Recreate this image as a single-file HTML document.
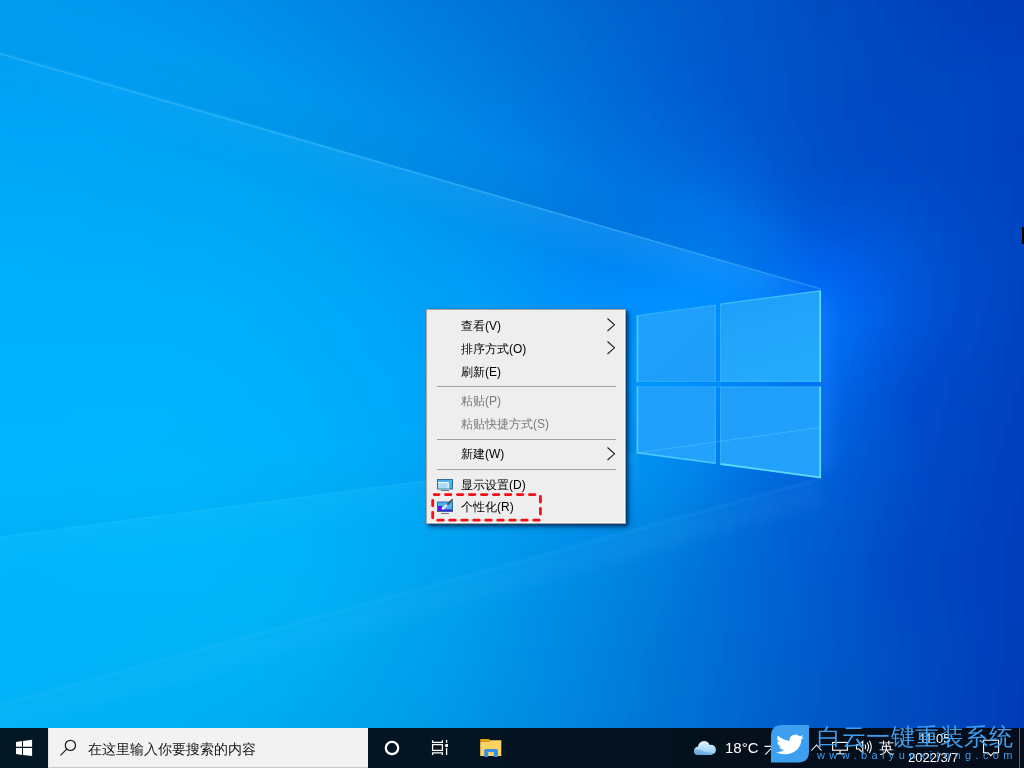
<!DOCTYPE html>
<html><head><meta charset="utf-8">
<style>
html,body{margin:0;padding:0;width:1024px;height:768px;overflow:hidden;background:#0a7ee0;font-family:"Liberation Sans",sans-serif;}
#wall{position:absolute;left:0;top:0;width:1024px;height:768px;}
#menu{position:absolute;left:426px;top:309px;width:198px;height:213px;background:#eeeeee;border:1px solid #aaa49e;box-shadow:2px 2px 3px rgba(0,10,40,0.5),3px 3px 6px rgba(0,10,40,0.35);}
#menu:after{content:"";position:absolute;left:0;top:0;right:0;bottom:0;border-right:1px solid #f8f8f8;border-bottom:1px solid #f8f8f8;}
.it{position:absolute;left:34px;font-size:12px;line-height:14px;color:#000;white-space:nowrap;}
.dis{color:#7a7a7a;}
.sep{position:absolute;left:10px;width:179px;height:1px;background:#a0a0a0;}
#taskbar{position:absolute;left:0;top:728px;width:1024px;height:40px;background:linear-gradient(90deg,#031824 0%,#041522 40%,#050f1c 75%,#050d1a 100%);}
#search{position:absolute;left:48px;top:0;width:320px;height:40px;background:#f2f2f2;box-sizing:border-box;border-left:1px solid #e4e4e4;border-bottom:1px solid #c8c8c8;}
.stxt{position:absolute;left:39px;top:13px;font-size:14px;line-height:16px;color:#161616;white-space:nowrap;}
.w{position:absolute;color:#fff;white-space:nowrap;}
svg.ic{position:absolute;overflow:visible;}
#menu,#taskbar,.w{will-change:transform;}
</style></head><body>
<svg id="wall" width="1024" height="768" viewBox="0 0 1024 768"><defs><linearGradient id="r0" gradientUnits="userSpaceOnUse" x1="-48" y1="0" x2="1072" y2="0"><stop offset="0.0000" stop-color="#009bef"/><stop offset="0.0286" stop-color="#009aee"/><stop offset="0.0571" stop-color="#0099ee"/><stop offset="0.0857" stop-color="#0098ed"/><stop offset="0.1143" stop-color="#0097ed"/><stop offset="0.1429" stop-color="#0095ed"/><stop offset="0.1714" stop-color="#0093ec"/><stop offset="0.2000" stop-color="#0091eb"/><stop offset="0.2286" stop-color="#008fe9"/><stop offset="0.2571" stop-color="#008ce8"/><stop offset="0.2857" stop-color="#0089e6"/><stop offset="0.3143" stop-color="#0086e4"/><stop offset="0.3429" stop-color="#0083e2"/><stop offset="0.3714" stop-color="#0080e0"/><stop offset="0.4000" stop-color="#007cdd"/><stop offset="0.4286" stop-color="#0079da"/><stop offset="0.4571" stop-color="#0075d8"/><stop offset="0.4857" stop-color="#0072d5"/><stop offset="0.5143" stop-color="#006ed3"/><stop offset="0.5429" stop-color="#006ad1"/><stop offset="0.5714" stop-color="#0166cf"/><stop offset="0.6000" stop-color="#0162cd"/><stop offset="0.6286" stop-color="#025ecb"/><stop offset="0.6571" stop-color="#025ac9"/><stop offset="0.6857" stop-color="#0357c7"/><stop offset="0.7143" stop-color="#0353c5"/><stop offset="0.7429" stop-color="#0450c2"/><stop offset="0.7714" stop-color="#044dc0"/><stop offset="0.8000" stop-color="#044abe"/><stop offset="0.8286" stop-color="#0546bd"/><stop offset="0.8571" stop-color="#0543bb"/><stop offset="0.8857" stop-color="#0640b9"/><stop offset="0.9143" stop-color="#063db8"/><stop offset="0.9429" stop-color="#063bb7"/><stop offset="0.9714" stop-color="#0639b6"/><stop offset="1.0000" stop-color="#0737b5"/></linearGradient><linearGradient id="r1" gradientUnits="userSpaceOnUse" x1="-48" y1="0" x2="1072" y2="0"><stop offset="0.0000" stop-color="#009def"/><stop offset="0.0286" stop-color="#009cef"/><stop offset="0.0571" stop-color="#009aef"/><stop offset="0.0857" stop-color="#0099ef"/><stop offset="0.1143" stop-color="#0098ef"/><stop offset="0.1429" stop-color="#0097ee"/><stop offset="0.1714" stop-color="#0095ed"/><stop offset="0.2000" stop-color="#0093ec"/><stop offset="0.2286" stop-color="#0091eb"/><stop offset="0.2571" stop-color="#008ee9"/><stop offset="0.2857" stop-color="#008be7"/><stop offset="0.3143" stop-color="#0088e5"/><stop offset="0.3429" stop-color="#0085e3"/><stop offset="0.3714" stop-color="#0081e1"/><stop offset="0.4000" stop-color="#007ede"/><stop offset="0.4286" stop-color="#007adc"/><stop offset="0.4571" stop-color="#0077d9"/><stop offset="0.4857" stop-color="#0073d7"/><stop offset="0.5143" stop-color="#006fd4"/><stop offset="0.5429" stop-color="#006bd2"/><stop offset="0.5714" stop-color="#0167d0"/><stop offset="0.6000" stop-color="#0163ce"/><stop offset="0.6286" stop-color="#025fcc"/><stop offset="0.6571" stop-color="#025bca"/><stop offset="0.6857" stop-color="#0357c8"/><stop offset="0.7143" stop-color="#0354c6"/><stop offset="0.7429" stop-color="#0451c3"/><stop offset="0.7714" stop-color="#044ec1"/><stop offset="0.8000" stop-color="#044abf"/><stop offset="0.8286" stop-color="#0547be"/><stop offset="0.8571" stop-color="#0544bc"/><stop offset="0.8857" stop-color="#0541bb"/><stop offset="0.9143" stop-color="#063eb9"/><stop offset="0.9429" stop-color="#063cb8"/><stop offset="0.9714" stop-color="#063ab7"/><stop offset="1.0000" stop-color="#0638b6"/></linearGradient><linearGradient id="r2" gradientUnits="userSpaceOnUse" x1="-48" y1="0" x2="1072" y2="0"><stop offset="0.0000" stop-color="#009ef0"/><stop offset="0.0286" stop-color="#009df0"/><stop offset="0.0571" stop-color="#009cf0"/><stop offset="0.0857" stop-color="#009bf0"/><stop offset="0.1143" stop-color="#009af0"/><stop offset="0.1429" stop-color="#0099f0"/><stop offset="0.1714" stop-color="#0097ef"/><stop offset="0.2000" stop-color="#0095ed"/><stop offset="0.2286" stop-color="#0093ec"/><stop offset="0.2571" stop-color="#0090ea"/><stop offset="0.2857" stop-color="#008de9"/><stop offset="0.3143" stop-color="#008ae7"/><stop offset="0.3429" stop-color="#0087e5"/><stop offset="0.3714" stop-color="#0083e2"/><stop offset="0.4000" stop-color="#0080e0"/><stop offset="0.4286" stop-color="#007cdd"/><stop offset="0.4571" stop-color="#0078db"/><stop offset="0.4857" stop-color="#0075d8"/><stop offset="0.5143" stop-color="#0071d6"/><stop offset="0.5429" stop-color="#006dd3"/><stop offset="0.5714" stop-color="#0168d2"/><stop offset="0.6000" stop-color="#0164d0"/><stop offset="0.6286" stop-color="#0260ce"/><stop offset="0.6571" stop-color="#025ccb"/><stop offset="0.6857" stop-color="#0358c9"/><stop offset="0.7143" stop-color="#0354c7"/><stop offset="0.7429" stop-color="#0351c4"/><stop offset="0.7714" stop-color="#044ec2"/><stop offset="0.8000" stop-color="#044bc0"/><stop offset="0.8286" stop-color="#0548bf"/><stop offset="0.8571" stop-color="#0545bd"/><stop offset="0.8857" stop-color="#0542bc"/><stop offset="0.9143" stop-color="#063fba"/><stop offset="0.9429" stop-color="#063db9"/><stop offset="0.9714" stop-color="#063cb9"/><stop offset="1.0000" stop-color="#0639b7"/></linearGradient><linearGradient id="r3" gradientUnits="userSpaceOnUse" x1="-48" y1="0" x2="1072" y2="0"><stop offset="0.0000" stop-color="#009ff1"/><stop offset="0.0286" stop-color="#009ef1"/><stop offset="0.0571" stop-color="#009df1"/><stop offset="0.0857" stop-color="#009cf1"/><stop offset="0.1143" stop-color="#009cf1"/><stop offset="0.1429" stop-color="#009af1"/><stop offset="0.1714" stop-color="#0099f0"/><stop offset="0.2000" stop-color="#0097ef"/><stop offset="0.2286" stop-color="#0095ed"/><stop offset="0.2571" stop-color="#0092ec"/><stop offset="0.2857" stop-color="#008fea"/><stop offset="0.3143" stop-color="#008ce8"/><stop offset="0.3429" stop-color="#0088e6"/><stop offset="0.3714" stop-color="#0085e4"/><stop offset="0.4000" stop-color="#0081e1"/><stop offset="0.4286" stop-color="#007edf"/><stop offset="0.4571" stop-color="#007adc"/><stop offset="0.4857" stop-color="#0076d9"/><stop offset="0.5143" stop-color="#0072d7"/><stop offset="0.5429" stop-color="#006ed5"/><stop offset="0.5714" stop-color="#0169d3"/><stop offset="0.6000" stop-color="#0165d1"/><stop offset="0.6286" stop-color="#0261cf"/><stop offset="0.6571" stop-color="#025ccd"/><stop offset="0.6857" stop-color="#0358ca"/><stop offset="0.7143" stop-color="#0354c8"/><stop offset="0.7429" stop-color="#0351c5"/><stop offset="0.7714" stop-color="#044ec3"/><stop offset="0.8000" stop-color="#044bc1"/><stop offset="0.8286" stop-color="#0449c0"/><stop offset="0.8571" stop-color="#0546be"/><stop offset="0.8857" stop-color="#0543bd"/><stop offset="0.9143" stop-color="#0541bc"/><stop offset="0.9429" stop-color="#063fbb"/><stop offset="0.9714" stop-color="#063dba"/><stop offset="1.0000" stop-color="#063bb8"/></linearGradient><linearGradient id="r4" gradientUnits="userSpaceOnUse" x1="-48" y1="0" x2="1072" y2="0"><stop offset="0.0000" stop-color="#00a0f2"/><stop offset="0.0286" stop-color="#00a0f2"/><stop offset="0.0571" stop-color="#009ff2"/><stop offset="0.0857" stop-color="#009ef2"/><stop offset="0.1143" stop-color="#009df3"/><stop offset="0.1429" stop-color="#009cf2"/><stop offset="0.1714" stop-color="#009bf1"/><stop offset="0.2000" stop-color="#0099f0"/><stop offset="0.2286" stop-color="#0097ee"/><stop offset="0.2571" stop-color="#0094ed"/><stop offset="0.2857" stop-color="#0091eb"/><stop offset="0.3143" stop-color="#008ee9"/><stop offset="0.3429" stop-color="#008be7"/><stop offset="0.3714" stop-color="#0087e5"/><stop offset="0.4000" stop-color="#0083e3"/><stop offset="0.4286" stop-color="#0080e0"/><stop offset="0.4571" stop-color="#007cde"/><stop offset="0.4857" stop-color="#0078db"/><stop offset="0.5143" stop-color="#0073d9"/><stop offset="0.5429" stop-color="#006fd6"/><stop offset="0.5714" stop-color="#006bd4"/><stop offset="0.6000" stop-color="#0166d2"/><stop offset="0.6286" stop-color="#0261d0"/><stop offset="0.6571" stop-color="#025dce"/><stop offset="0.6857" stop-color="#0358cc"/><stop offset="0.7143" stop-color="#0355c9"/><stop offset="0.7429" stop-color="#0352c6"/><stop offset="0.7714" stop-color="#044fc4"/><stop offset="0.8000" stop-color="#044cc2"/><stop offset="0.8286" stop-color="#0449c0"/><stop offset="0.8571" stop-color="#0547bf"/><stop offset="0.8857" stop-color="#0544be"/><stop offset="0.9143" stop-color="#0542be"/><stop offset="0.9429" stop-color="#0541bd"/><stop offset="0.9714" stop-color="#063fbc"/><stop offset="1.0000" stop-color="#063cba"/></linearGradient><linearGradient id="r5" gradientUnits="userSpaceOnUse" x1="-48" y1="0" x2="1072" y2="0"><stop offset="0.0000" stop-color="#00a2f3"/><stop offset="0.0286" stop-color="#00a1f3"/><stop offset="0.0571" stop-color="#00a0f3"/><stop offset="0.0857" stop-color="#00a0f4"/><stop offset="0.1143" stop-color="#009ff4"/><stop offset="0.1429" stop-color="#009ef3"/><stop offset="0.1714" stop-color="#009df2"/><stop offset="0.2000" stop-color="#009bf1"/><stop offset="0.2286" stop-color="#0099ef"/><stop offset="0.2571" stop-color="#0097ee"/><stop offset="0.2857" stop-color="#0094ec"/><stop offset="0.3143" stop-color="#0090eb"/><stop offset="0.3429" stop-color="#008de9"/><stop offset="0.3714" stop-color="#0089e7"/><stop offset="0.4000" stop-color="#0085e5"/><stop offset="0.4286" stop-color="#0081e2"/><stop offset="0.4571" stop-color="#007edf"/><stop offset="0.4857" stop-color="#0079dd"/><stop offset="0.5143" stop-color="#0075da"/><stop offset="0.5429" stop-color="#0070d8"/><stop offset="0.5714" stop-color="#006cd6"/><stop offset="0.6000" stop-color="#0167d4"/><stop offset="0.6286" stop-color="#0162d2"/><stop offset="0.6571" stop-color="#025dcf"/><stop offset="0.6857" stop-color="#0359cd"/><stop offset="0.7143" stop-color="#0355ca"/><stop offset="0.7429" stop-color="#0352c7"/><stop offset="0.7714" stop-color="#044fc5"/><stop offset="0.8000" stop-color="#044cc3"/><stop offset="0.8286" stop-color="#044ac1"/><stop offset="0.8571" stop-color="#0547c0"/><stop offset="0.8857" stop-color="#0545bf"/><stop offset="0.9143" stop-color="#0544bf"/><stop offset="0.9429" stop-color="#0543be"/><stop offset="0.9714" stop-color="#0640bd"/><stop offset="1.0000" stop-color="#063dbb"/></linearGradient><linearGradient id="r6" gradientUnits="userSpaceOnUse" x1="-48" y1="0" x2="1072" y2="0"><stop offset="0.0000" stop-color="#00a3f4"/><stop offset="0.0286" stop-color="#00a2f4"/><stop offset="0.0571" stop-color="#00a2f4"/><stop offset="0.0857" stop-color="#00a1f5"/><stop offset="0.1143" stop-color="#00a1f5"/><stop offset="0.1429" stop-color="#00a0f5"/><stop offset="0.1714" stop-color="#009ef3"/><stop offset="0.2000" stop-color="#009df2"/><stop offset="0.2286" stop-color="#009bf0"/><stop offset="0.2571" stop-color="#0099ef"/><stop offset="0.2857" stop-color="#0096ed"/><stop offset="0.3143" stop-color="#0093ec"/><stop offset="0.3429" stop-color="#008fea"/><stop offset="0.3714" stop-color="#008be8"/><stop offset="0.4000" stop-color="#0087e6"/><stop offset="0.4286" stop-color="#0083e4"/><stop offset="0.4571" stop-color="#007fe1"/><stop offset="0.4857" stop-color="#007bde"/><stop offset="0.5143" stop-color="#0077dc"/><stop offset="0.5429" stop-color="#0072da"/><stop offset="0.5714" stop-color="#006dd7"/><stop offset="0.6000" stop-color="#0168d5"/><stop offset="0.6286" stop-color="#0163d3"/><stop offset="0.6571" stop-color="#025ed1"/><stop offset="0.6857" stop-color="#0359ce"/><stop offset="0.7143" stop-color="#0355cb"/><stop offset="0.7429" stop-color="#0352c8"/><stop offset="0.7714" stop-color="#044fc5"/><stop offset="0.8000" stop-color="#044cc3"/><stop offset="0.8286" stop-color="#044ac2"/><stop offset="0.8571" stop-color="#0548c1"/><stop offset="0.8857" stop-color="#0546c0"/><stop offset="0.9143" stop-color="#0544c0"/><stop offset="0.9429" stop-color="#0543bf"/><stop offset="0.9714" stop-color="#0541be"/><stop offset="1.0000" stop-color="#063dbb"/></linearGradient><linearGradient id="r7" gradientUnits="userSpaceOnUse" x1="-48" y1="0" x2="1072" y2="0"><stop offset="0.0000" stop-color="#00a4f5"/><stop offset="0.0286" stop-color="#00a3f5"/><stop offset="0.0571" stop-color="#00a3f5"/><stop offset="0.0857" stop-color="#00a2f6"/><stop offset="0.1143" stop-color="#00a2f6"/><stop offset="0.1429" stop-color="#00a1f5"/><stop offset="0.1714" stop-color="#00a0f4"/><stop offset="0.2000" stop-color="#009ff3"/><stop offset="0.2286" stop-color="#009df1"/><stop offset="0.2571" stop-color="#009bf0"/><stop offset="0.2857" stop-color="#0098ef"/><stop offset="0.3143" stop-color="#0095ed"/><stop offset="0.3429" stop-color="#0091eb"/><stop offset="0.3714" stop-color="#008eea"/><stop offset="0.4000" stop-color="#0089e8"/><stop offset="0.4286" stop-color="#0086e5"/><stop offset="0.4571" stop-color="#0081e3"/><stop offset="0.4857" stop-color="#007de0"/><stop offset="0.5143" stop-color="#0078de"/><stop offset="0.5429" stop-color="#0073db"/><stop offset="0.5714" stop-color="#006ed9"/><stop offset="0.6000" stop-color="#0169d7"/><stop offset="0.6286" stop-color="#0164d4"/><stop offset="0.6571" stop-color="#025fd2"/><stop offset="0.6857" stop-color="#025ad0"/><stop offset="0.7143" stop-color="#0356cc"/><stop offset="0.7429" stop-color="#0352c9"/><stop offset="0.7714" stop-color="#044fc6"/><stop offset="0.8000" stop-color="#044cc4"/><stop offset="0.8286" stop-color="#044ac3"/><stop offset="0.8571" stop-color="#0449c2"/><stop offset="0.8857" stop-color="#0546c1"/><stop offset="0.9143" stop-color="#0545c1"/><stop offset="0.9429" stop-color="#0543c0"/><stop offset="0.9714" stop-color="#0541be"/><stop offset="1.0000" stop-color="#063ebc"/></linearGradient><linearGradient id="r8" gradientUnits="userSpaceOnUse" x1="-48" y1="0" x2="1072" y2="0"><stop offset="0.0000" stop-color="#00a5f6"/><stop offset="0.0286" stop-color="#00a5f6"/><stop offset="0.0571" stop-color="#00a4f6"/><stop offset="0.0857" stop-color="#00a4f6"/><stop offset="0.1143" stop-color="#00a3f7"/><stop offset="0.1429" stop-color="#00a3f6"/><stop offset="0.1714" stop-color="#00a2f5"/><stop offset="0.2000" stop-color="#00a0f3"/><stop offset="0.2286" stop-color="#009ff2"/><stop offset="0.2571" stop-color="#009df1"/><stop offset="0.2857" stop-color="#009bf0"/><stop offset="0.3143" stop-color="#0098ee"/><stop offset="0.3429" stop-color="#0094ed"/><stop offset="0.3714" stop-color="#0090eb"/><stop offset="0.4000" stop-color="#008ce9"/><stop offset="0.4286" stop-color="#0088e7"/><stop offset="0.4571" stop-color="#0084e4"/><stop offset="0.4857" stop-color="#007fe2"/><stop offset="0.5143" stop-color="#007ae0"/><stop offset="0.5429" stop-color="#0075dd"/><stop offset="0.5714" stop-color="#0070da"/><stop offset="0.6000" stop-color="#006bd8"/><stop offset="0.6286" stop-color="#0166d6"/><stop offset="0.6571" stop-color="#0260d4"/><stop offset="0.6857" stop-color="#025bd1"/><stop offset="0.7143" stop-color="#0356cd"/><stop offset="0.7429" stop-color="#0352ca"/><stop offset="0.7714" stop-color="#044fc7"/><stop offset="0.8000" stop-color="#044cc5"/><stop offset="0.8286" stop-color="#044bc4"/><stop offset="0.8571" stop-color="#0449c3"/><stop offset="0.8857" stop-color="#0547c2"/><stop offset="0.9143" stop-color="#0545c1"/><stop offset="0.9429" stop-color="#0543c0"/><stop offset="0.9714" stop-color="#0541be"/><stop offset="1.0000" stop-color="#063ebc"/></linearGradient><linearGradient id="r9" gradientUnits="userSpaceOnUse" x1="-48" y1="0" x2="1072" y2="0"><stop offset="0.0000" stop-color="#00a6f7"/><stop offset="0.0286" stop-color="#00a6f7"/><stop offset="0.0571" stop-color="#00a5f7"/><stop offset="0.0857" stop-color="#00a5f7"/><stop offset="0.1143" stop-color="#00a5f7"/><stop offset="0.1429" stop-color="#00a4f6"/><stop offset="0.1714" stop-color="#00a3f5"/><stop offset="0.2000" stop-color="#00a2f4"/><stop offset="0.2286" stop-color="#00a1f3"/><stop offset="0.2571" stop-color="#009ff2"/><stop offset="0.2857" stop-color="#009df1"/><stop offset="0.3143" stop-color="#009aef"/><stop offset="0.3429" stop-color="#0096ee"/><stop offset="0.3714" stop-color="#0092ec"/><stop offset="0.4000" stop-color="#008eea"/><stop offset="0.4286" stop-color="#008ae8"/><stop offset="0.4571" stop-color="#0086e6"/><stop offset="0.4857" stop-color="#0081e4"/><stop offset="0.5143" stop-color="#007ce1"/><stop offset="0.5429" stop-color="#0077df"/><stop offset="0.5714" stop-color="#0072dc"/><stop offset="0.6000" stop-color="#006cda"/><stop offset="0.6286" stop-color="#0167d8"/><stop offset="0.6571" stop-color="#0162d6"/><stop offset="0.6857" stop-color="#025dd3"/><stop offset="0.7143" stop-color="#0358cf"/><stop offset="0.7429" stop-color="#0353cb"/><stop offset="0.7714" stop-color="#044fc7"/><stop offset="0.8000" stop-color="#044dc6"/><stop offset="0.8286" stop-color="#044bc5"/><stop offset="0.8571" stop-color="#0449c4"/><stop offset="0.8857" stop-color="#0547c3"/><stop offset="0.9143" stop-color="#0545c1"/><stop offset="0.9429" stop-color="#0543c0"/><stop offset="0.9714" stop-color="#0540be"/><stop offset="1.0000" stop-color="#063ebc"/></linearGradient><linearGradient id="r10" gradientUnits="userSpaceOnUse" x1="-48" y1="0" x2="1072" y2="0"><stop offset="0.0000" stop-color="#00a7f7"/><stop offset="0.0286" stop-color="#00a7f7"/><stop offset="0.0571" stop-color="#00a6f7"/><stop offset="0.0857" stop-color="#00a6f7"/><stop offset="0.1143" stop-color="#00a6f7"/><stop offset="0.1429" stop-color="#00a5f7"/><stop offset="0.1714" stop-color="#00a4f5"/><stop offset="0.2000" stop-color="#00a3f4"/><stop offset="0.2286" stop-color="#00a2f3"/><stop offset="0.2571" stop-color="#00a1f3"/><stop offset="0.2857" stop-color="#009ff2"/><stop offset="0.3143" stop-color="#009cf0"/><stop offset="0.3429" stop-color="#0098ef"/><stop offset="0.3714" stop-color="#0095ee"/><stop offset="0.4000" stop-color="#0091ec"/><stop offset="0.4286" stop-color="#008cea"/><stop offset="0.4571" stop-color="#0088e8"/><stop offset="0.4857" stop-color="#0084e5"/><stop offset="0.5143" stop-color="#007ee3"/><stop offset="0.5429" stop-color="#0079e0"/><stop offset="0.5714" stop-color="#0073de"/><stop offset="0.6000" stop-color="#006edb"/><stop offset="0.6286" stop-color="#016ada"/><stop offset="0.6571" stop-color="#0165d8"/><stop offset="0.6857" stop-color="#025fd5"/><stop offset="0.7143" stop-color="#025ad0"/><stop offset="0.7429" stop-color="#0354cc"/><stop offset="0.7714" stop-color="#0450c8"/><stop offset="0.8000" stop-color="#044dc7"/><stop offset="0.8286" stop-color="#044bc6"/><stop offset="0.8571" stop-color="#044ac5"/><stop offset="0.8857" stop-color="#0547c3"/><stop offset="0.9143" stop-color="#0545c2"/><stop offset="0.9429" stop-color="#0542c0"/><stop offset="0.9714" stop-color="#0540be"/><stop offset="1.0000" stop-color="#063ebc"/></linearGradient><linearGradient id="r11" gradientUnits="userSpaceOnUse" x1="-48" y1="0" x2="1072" y2="0"><stop offset="0.0000" stop-color="#00a8f8"/><stop offset="0.0286" stop-color="#00a8f8"/><stop offset="0.0571" stop-color="#00a8f8"/><stop offset="0.0857" stop-color="#00a7f8"/><stop offset="0.1143" stop-color="#00a7f7"/><stop offset="0.1429" stop-color="#00a6f7"/><stop offset="0.1714" stop-color="#00a5f6"/><stop offset="0.2000" stop-color="#00a5f5"/><stop offset="0.2286" stop-color="#00a4f4"/><stop offset="0.2571" stop-color="#00a3f3"/><stop offset="0.2857" stop-color="#00a1f3"/><stop offset="0.3143" stop-color="#009ef2"/><stop offset="0.3429" stop-color="#009bf0"/><stop offset="0.3714" stop-color="#0097ef"/><stop offset="0.4000" stop-color="#0093ed"/><stop offset="0.4286" stop-color="#008feb"/><stop offset="0.4571" stop-color="#008be9"/><stop offset="0.4857" stop-color="#0086e7"/><stop offset="0.5143" stop-color="#0081e5"/><stop offset="0.5429" stop-color="#007be2"/><stop offset="0.5714" stop-color="#0076e0"/><stop offset="0.6000" stop-color="#0071dd"/><stop offset="0.6286" stop-color="#006cdc"/><stop offset="0.6571" stop-color="#0168da"/><stop offset="0.6857" stop-color="#0162d7"/><stop offset="0.7143" stop-color="#025cd3"/><stop offset="0.7429" stop-color="#0355cd"/><stop offset="0.7714" stop-color="#0450ca"/><stop offset="0.8000" stop-color="#044dc8"/><stop offset="0.8286" stop-color="#044cc7"/><stop offset="0.8571" stop-color="#044ac6"/><stop offset="0.8857" stop-color="#0547c4"/><stop offset="0.9143" stop-color="#0545c2"/><stop offset="0.9429" stop-color="#0543c0"/><stop offset="0.9714" stop-color="#0540bf"/><stop offset="1.0000" stop-color="#063ebc"/></linearGradient><linearGradient id="r12" gradientUnits="userSpaceOnUse" x1="-48" y1="0" x2="1072" y2="0"><stop offset="0.0000" stop-color="#00a9f9"/><stop offset="0.0286" stop-color="#00a9f8"/><stop offset="0.0571" stop-color="#00a9f8"/><stop offset="0.0857" stop-color="#00a8f8"/><stop offset="0.1143" stop-color="#00a8f8"/><stop offset="0.1429" stop-color="#00a7f7"/><stop offset="0.1714" stop-color="#00a7f6"/><stop offset="0.2000" stop-color="#00a6f5"/><stop offset="0.2286" stop-color="#00a5f5"/><stop offset="0.2571" stop-color="#00a4f4"/><stop offset="0.2857" stop-color="#00a3f3"/><stop offset="0.3143" stop-color="#00a0f3"/><stop offset="0.3429" stop-color="#009df1"/><stop offset="0.3714" stop-color="#0099f0"/><stop offset="0.4000" stop-color="#0095ef"/><stop offset="0.4286" stop-color="#0091ed"/><stop offset="0.4571" stop-color="#008deb"/><stop offset="0.4857" stop-color="#0088e9"/><stop offset="0.5143" stop-color="#0083e7"/><stop offset="0.5429" stop-color="#007de4"/><stop offset="0.5714" stop-color="#0078e2"/><stop offset="0.6000" stop-color="#0073e0"/><stop offset="0.6286" stop-color="#006fdf"/><stop offset="0.6571" stop-color="#006bdd"/><stop offset="0.6857" stop-color="#0166da"/><stop offset="0.7143" stop-color="#025fd5"/><stop offset="0.7429" stop-color="#0357d0"/><stop offset="0.7714" stop-color="#0351cb"/><stop offset="0.8000" stop-color="#044eca"/><stop offset="0.8286" stop-color="#044dc9"/><stop offset="0.8571" stop-color="#044bc7"/><stop offset="0.8857" stop-color="#0548c5"/><stop offset="0.9143" stop-color="#0545c3"/><stop offset="0.9429" stop-color="#0543c1"/><stop offset="0.9714" stop-color="#0541bf"/><stop offset="1.0000" stop-color="#063ebc"/></linearGradient><linearGradient id="r13" gradientUnits="userSpaceOnUse" x1="-48" y1="0" x2="1072" y2="0"><stop offset="0.0000" stop-color="#00aaf9"/><stop offset="0.0286" stop-color="#00aaf9"/><stop offset="0.0571" stop-color="#00a9f9"/><stop offset="0.0857" stop-color="#00a9f8"/><stop offset="0.1143" stop-color="#00a9f8"/><stop offset="0.1429" stop-color="#00a8f7"/><stop offset="0.1714" stop-color="#00a8f6"/><stop offset="0.2000" stop-color="#00a7f6"/><stop offset="0.2286" stop-color="#00a7f5"/><stop offset="0.2571" stop-color="#00a6f5"/><stop offset="0.2857" stop-color="#00a4f4"/><stop offset="0.3143" stop-color="#00a1f4"/><stop offset="0.3429" stop-color="#009ef3"/><stop offset="0.3714" stop-color="#009bf1"/><stop offset="0.4000" stop-color="#0098f0"/><stop offset="0.4286" stop-color="#0094ee"/><stop offset="0.4571" stop-color="#0090ed"/><stop offset="0.4857" stop-color="#008beb"/><stop offset="0.5143" stop-color="#0086e9"/><stop offset="0.5429" stop-color="#0080e7"/><stop offset="0.5714" stop-color="#007be4"/><stop offset="0.6000" stop-color="#0076e2"/><stop offset="0.6286" stop-color="#0073e2"/><stop offset="0.6571" stop-color="#0070e1"/><stop offset="0.6857" stop-color="#006ade"/><stop offset="0.7143" stop-color="#0163d9"/><stop offset="0.7429" stop-color="#025ad3"/><stop offset="0.7714" stop-color="#0352ce"/><stop offset="0.8000" stop-color="#0450cd"/><stop offset="0.8286" stop-color="#044ecb"/><stop offset="0.8571" stop-color="#044dc9"/><stop offset="0.8857" stop-color="#044ac6"/><stop offset="0.9143" stop-color="#0546c4"/><stop offset="0.9429" stop-color="#0544c1"/><stop offset="0.9714" stop-color="#0541bf"/><stop offset="1.0000" stop-color="#063ebc"/></linearGradient><linearGradient id="r14" gradientUnits="userSpaceOnUse" x1="-48" y1="0" x2="1072" y2="0"><stop offset="0.0000" stop-color="#00abfa"/><stop offset="0.0286" stop-color="#00abf9"/><stop offset="0.0571" stop-color="#00aaf9"/><stop offset="0.0857" stop-color="#00aaf9"/><stop offset="0.1143" stop-color="#00aaf8"/><stop offset="0.1429" stop-color="#00a9f7"/><stop offset="0.1714" stop-color="#00a9f6"/><stop offset="0.2000" stop-color="#00a8f6"/><stop offset="0.2286" stop-color="#00a8f6"/><stop offset="0.2571" stop-color="#00a7f6"/><stop offset="0.2857" stop-color="#00a5f5"/><stop offset="0.3143" stop-color="#00a3f5"/><stop offset="0.3429" stop-color="#00a0f4"/><stop offset="0.3714" stop-color="#009df2"/><stop offset="0.4000" stop-color="#009af1"/><stop offset="0.4286" stop-color="#0096f0"/><stop offset="0.4571" stop-color="#0092ee"/><stop offset="0.4857" stop-color="#008eed"/><stop offset="0.5143" stop-color="#0089eb"/><stop offset="0.5429" stop-color="#0083ea"/><stop offset="0.5714" stop-color="#007ee8"/><stop offset="0.6000" stop-color="#0079e6"/><stop offset="0.6286" stop-color="#0077e6"/><stop offset="0.6571" stop-color="#0074e6"/><stop offset="0.6857" stop-color="#006fe3"/><stop offset="0.7143" stop-color="#0167de"/><stop offset="0.7429" stop-color="#025dd7"/><stop offset="0.7714" stop-color="#0355d2"/><stop offset="0.8000" stop-color="#0352d1"/><stop offset="0.8286" stop-color="#0451ce"/><stop offset="0.8571" stop-color="#044ecb"/><stop offset="0.8857" stop-color="#044bc8"/><stop offset="0.9143" stop-color="#0547c5"/><stop offset="0.9429" stop-color="#0544c2"/><stop offset="0.9714" stop-color="#0541bf"/><stop offset="1.0000" stop-color="#063ebc"/></linearGradient><linearGradient id="r15" gradientUnits="userSpaceOnUse" x1="-48" y1="0" x2="1072" y2="0"><stop offset="0.0000" stop-color="#00acfa"/><stop offset="0.0286" stop-color="#00abfa"/><stop offset="0.0571" stop-color="#00abfa"/><stop offset="0.0857" stop-color="#00abf9"/><stop offset="0.1143" stop-color="#00abf9"/><stop offset="0.1429" stop-color="#00aaf8"/><stop offset="0.1714" stop-color="#00aaf7"/><stop offset="0.2000" stop-color="#00a9f7"/><stop offset="0.2286" stop-color="#00a9f7"/><stop offset="0.2571" stop-color="#00a8f7"/><stop offset="0.2857" stop-color="#00a6f6"/><stop offset="0.3143" stop-color="#00a4f6"/><stop offset="0.3429" stop-color="#00a2f5"/><stop offset="0.3714" stop-color="#009ff4"/><stop offset="0.4000" stop-color="#009cf2"/><stop offset="0.4286" stop-color="#0098f1"/><stop offset="0.4571" stop-color="#0095f0"/><stop offset="0.4857" stop-color="#0090ef"/><stop offset="0.5143" stop-color="#008bee"/><stop offset="0.5429" stop-color="#0086ed"/><stop offset="0.5714" stop-color="#0081eb"/><stop offset="0.6000" stop-color="#007dea"/><stop offset="0.6286" stop-color="#007beb"/><stop offset="0.6571" stop-color="#0079eb"/><stop offset="0.6857" stop-color="#0075e9"/><stop offset="0.7143" stop-color="#006de3"/><stop offset="0.7429" stop-color="#0162dc"/><stop offset="0.7714" stop-color="#0358d8"/><stop offset="0.8000" stop-color="#0354d6"/><stop offset="0.8286" stop-color="#0353d2"/><stop offset="0.8571" stop-color="#0450ce"/><stop offset="0.8857" stop-color="#044cca"/><stop offset="0.9143" stop-color="#0548c5"/><stop offset="0.9429" stop-color="#0545c2"/><stop offset="0.9714" stop-color="#0541bf"/><stop offset="1.0000" stop-color="#063ebc"/></linearGradient><linearGradient id="r16" gradientUnits="userSpaceOnUse" x1="-48" y1="0" x2="1072" y2="0"><stop offset="0.0000" stop-color="#00adfa"/><stop offset="0.0286" stop-color="#00acfa"/><stop offset="0.0571" stop-color="#00acfa"/><stop offset="0.0857" stop-color="#00acfa"/><stop offset="0.1143" stop-color="#00abf9"/><stop offset="0.1429" stop-color="#00abf8"/><stop offset="0.1714" stop-color="#00abf8"/><stop offset="0.2000" stop-color="#00aaf8"/><stop offset="0.2286" stop-color="#00aaf8"/><stop offset="0.2571" stop-color="#00a9f8"/><stop offset="0.2857" stop-color="#00a8f7"/><stop offset="0.3143" stop-color="#00a6f6"/><stop offset="0.3429" stop-color="#00a3f6"/><stop offset="0.3714" stop-color="#00a1f5"/><stop offset="0.4000" stop-color="#009ef4"/><stop offset="0.4286" stop-color="#009af3"/><stop offset="0.4571" stop-color="#0097f2"/><stop offset="0.4857" stop-color="#0093f1"/><stop offset="0.5143" stop-color="#008ef0"/><stop offset="0.5429" stop-color="#0089f0"/><stop offset="0.5714" stop-color="#0084ef"/><stop offset="0.6000" stop-color="#0081ef"/><stop offset="0.6286" stop-color="#0080ef"/><stop offset="0.6571" stop-color="#007ff0"/><stop offset="0.6857" stop-color="#007bef"/><stop offset="0.7143" stop-color="#0072ea"/><stop offset="0.7429" stop-color="#0167e3"/><stop offset="0.7714" stop-color="#025de0"/><stop offset="0.8000" stop-color="#0358dd"/><stop offset="0.8286" stop-color="#0356d7"/><stop offset="0.8571" stop-color="#0352d1"/><stop offset="0.8857" stop-color="#044ecb"/><stop offset="0.9143" stop-color="#0449c6"/><stop offset="0.9429" stop-color="#0545c2"/><stop offset="0.9714" stop-color="#0542bf"/><stop offset="1.0000" stop-color="#063ebc"/></linearGradient><linearGradient id="r17" gradientUnits="userSpaceOnUse" x1="-48" y1="0" x2="1072" y2="0"><stop offset="0.0000" stop-color="#00adfb"/><stop offset="0.0286" stop-color="#00adfb"/><stop offset="0.0571" stop-color="#00adfa"/><stop offset="0.0857" stop-color="#00adfa"/><stop offset="0.1143" stop-color="#00acf9"/><stop offset="0.1429" stop-color="#00acf9"/><stop offset="0.1714" stop-color="#00acf9"/><stop offset="0.2000" stop-color="#00abf9"/><stop offset="0.2286" stop-color="#00abf9"/><stop offset="0.2571" stop-color="#00aaf9"/><stop offset="0.2857" stop-color="#00a9f8"/><stop offset="0.3143" stop-color="#00a7f7"/><stop offset="0.3429" stop-color="#00a5f6"/><stop offset="0.3714" stop-color="#00a2f6"/><stop offset="0.4000" stop-color="#009ff5"/><stop offset="0.4286" stop-color="#009cf4"/><stop offset="0.4571" stop-color="#0099f3"/><stop offset="0.4857" stop-color="#0095f3"/><stop offset="0.5143" stop-color="#0091f3"/><stop offset="0.5429" stop-color="#008bf3"/><stop offset="0.5714" stop-color="#0087f3"/><stop offset="0.6000" stop-color="#0085f3"/><stop offset="0.6286" stop-color="#0084f4"/><stop offset="0.6571" stop-color="#0084f6"/><stop offset="0.6857" stop-color="#0081f5"/><stop offset="0.7143" stop-color="#0078f0"/><stop offset="0.7429" stop-color="#006dea"/><stop offset="0.7714" stop-color="#0162e8"/><stop offset="0.8000" stop-color="#025ce4"/><stop offset="0.8286" stop-color="#0359dc"/><stop offset="0.8571" stop-color="#0354d4"/><stop offset="0.8857" stop-color="#044ecd"/><stop offset="0.9143" stop-color="#044ac7"/><stop offset="0.9429" stop-color="#0545c3"/><stop offset="0.9714" stop-color="#0542bf"/><stop offset="1.0000" stop-color="#063ebc"/></linearGradient><linearGradient id="r18" gradientUnits="userSpaceOnUse" x1="-48" y1="0" x2="1072" y2="0"><stop offset="0.0000" stop-color="#00aefb"/><stop offset="0.0286" stop-color="#00aefb"/><stop offset="0.0571" stop-color="#00aefb"/><stop offset="0.0857" stop-color="#00adfa"/><stop offset="0.1143" stop-color="#00adfa"/><stop offset="0.1429" stop-color="#00adfa"/><stop offset="0.1714" stop-color="#00adf9"/><stop offset="0.2000" stop-color="#00acf9"/><stop offset="0.2286" stop-color="#00acfa"/><stop offset="0.2571" stop-color="#00abf9"/><stop offset="0.2857" stop-color="#00aaf9"/><stop offset="0.3143" stop-color="#00a8f8"/><stop offset="0.3429" stop-color="#00a6f7"/><stop offset="0.3714" stop-color="#00a3f7"/><stop offset="0.4000" stop-color="#00a1f6"/><stop offset="0.4286" stop-color="#009ef5"/><stop offset="0.4571" stop-color="#009bf5"/><stop offset="0.4857" stop-color="#0097f5"/><stop offset="0.5143" stop-color="#0093f5"/><stop offset="0.5429" stop-color="#008ef6"/><stop offset="0.5714" stop-color="#008af7"/><stop offset="0.6000" stop-color="#0088f7"/><stop offset="0.6286" stop-color="#0088f8"/><stop offset="0.6571" stop-color="#0089fb"/><stop offset="0.6857" stop-color="#0087fc"/><stop offset="0.7143" stop-color="#007ef7"/><stop offset="0.7429" stop-color="#0072f1"/><stop offset="0.7714" stop-color="#0167ef"/><stop offset="0.8000" stop-color="#025feb"/><stop offset="0.8286" stop-color="#025be0"/><stop offset="0.8571" stop-color="#0355d6"/><stop offset="0.8857" stop-color="#044fce"/><stop offset="0.9143" stop-color="#044ac8"/><stop offset="0.9429" stop-color="#0545c3"/><stop offset="0.9714" stop-color="#0542bf"/><stop offset="1.0000" stop-color="#063ebc"/></linearGradient><linearGradient id="r19" gradientUnits="userSpaceOnUse" x1="-48" y1="0" x2="1072" y2="0"><stop offset="0.0000" stop-color="#00affc"/><stop offset="0.0286" stop-color="#00aefb"/><stop offset="0.0571" stop-color="#00aefb"/><stop offset="0.0857" stop-color="#00aefb"/><stop offset="0.1143" stop-color="#00aefb"/><stop offset="0.1429" stop-color="#00aefa"/><stop offset="0.1714" stop-color="#00aefa"/><stop offset="0.2000" stop-color="#00adfa"/><stop offset="0.2286" stop-color="#00adfa"/><stop offset="0.2571" stop-color="#00acfa"/><stop offset="0.2857" stop-color="#00abfa"/><stop offset="0.3143" stop-color="#00a9f9"/><stop offset="0.3429" stop-color="#00a7f8"/><stop offset="0.3714" stop-color="#00a5f7"/><stop offset="0.4000" stop-color="#00a2f7"/><stop offset="0.4286" stop-color="#00a0f6"/><stop offset="0.4571" stop-color="#009df6"/><stop offset="0.4857" stop-color="#0099f6"/><stop offset="0.5143" stop-color="#0095f7"/><stop offset="0.5429" stop-color="#0091f9"/><stop offset="0.5714" stop-color="#008dfa"/><stop offset="0.6000" stop-color="#008cfb"/><stop offset="0.6286" stop-color="#008cfb"/><stop offset="0.6571" stop-color="#008dfe"/><stop offset="0.6857" stop-color="#008bff"/><stop offset="0.7143" stop-color="#0082fc"/><stop offset="0.7429" stop-color="#0076f7"/><stop offset="0.7714" stop-color="#006cf4"/><stop offset="0.8000" stop-color="#0164ef"/><stop offset="0.8286" stop-color="#025de3"/><stop offset="0.8571" stop-color="#0356d8"/><stop offset="0.8857" stop-color="#044fcf"/><stop offset="0.9143" stop-color="#044ac8"/><stop offset="0.9429" stop-color="#0545c3"/><stop offset="0.9714" stop-color="#0541bf"/><stop offset="1.0000" stop-color="#063ebc"/></linearGradient><linearGradient id="r20" gradientUnits="userSpaceOnUse" x1="-48" y1="0" x2="1072" y2="0"><stop offset="0.0000" stop-color="#00affc"/><stop offset="0.0286" stop-color="#00affc"/><stop offset="0.0571" stop-color="#00affc"/><stop offset="0.0857" stop-color="#00affb"/><stop offset="0.1143" stop-color="#00affb"/><stop offset="0.1429" stop-color="#00affb"/><stop offset="0.1714" stop-color="#00affb"/><stop offset="0.2000" stop-color="#00aefb"/><stop offset="0.2286" stop-color="#00aefb"/><stop offset="0.2571" stop-color="#00adfb"/><stop offset="0.2857" stop-color="#00acfa"/><stop offset="0.3143" stop-color="#00aaf9"/><stop offset="0.3429" stop-color="#00a8f9"/><stop offset="0.3714" stop-color="#00a6f8"/><stop offset="0.4000" stop-color="#00a3f8"/><stop offset="0.4286" stop-color="#00a1f7"/><stop offset="0.4571" stop-color="#009ef7"/><stop offset="0.4857" stop-color="#009bf8"/><stop offset="0.5143" stop-color="#0097f9"/><stop offset="0.5429" stop-color="#0093fb"/><stop offset="0.5714" stop-color="#0090fc"/><stop offset="0.6000" stop-color="#008ffd"/><stop offset="0.6286" stop-color="#008ffe"/><stop offset="0.6571" stop-color="#008fff"/><stop offset="0.6857" stop-color="#008dff"/><stop offset="0.7143" stop-color="#0085ff"/><stop offset="0.7429" stop-color="#007afa"/><stop offset="0.7714" stop-color="#0070f7"/><stop offset="0.8000" stop-color="#0167f1"/><stop offset="0.8286" stop-color="#025ee5"/><stop offset="0.8571" stop-color="#0356d9"/><stop offset="0.8857" stop-color="#044fcf"/><stop offset="0.9143" stop-color="#0449c8"/><stop offset="0.9429" stop-color="#0545c3"/><stop offset="0.9714" stop-color="#0541bf"/><stop offset="1.0000" stop-color="#063ebc"/></linearGradient><linearGradient id="r21" gradientUnits="userSpaceOnUse" x1="-48" y1="0" x2="1072" y2="0"><stop offset="0.0000" stop-color="#00b0fc"/><stop offset="0.0286" stop-color="#00b0fc"/><stop offset="0.0571" stop-color="#00b0fc"/><stop offset="0.0857" stop-color="#00b0fc"/><stop offset="0.1143" stop-color="#00b0fb"/><stop offset="0.1429" stop-color="#00b0fb"/><stop offset="0.1714" stop-color="#00affb"/><stop offset="0.2000" stop-color="#00affb"/><stop offset="0.2286" stop-color="#00affb"/><stop offset="0.2571" stop-color="#00aefb"/><stop offset="0.2857" stop-color="#00acfb"/><stop offset="0.3143" stop-color="#00abfa"/><stop offset="0.3429" stop-color="#00a9f9"/><stop offset="0.3714" stop-color="#00a7f9"/><stop offset="0.4000" stop-color="#00a5f8"/><stop offset="0.4286" stop-color="#00a2f8"/><stop offset="0.4571" stop-color="#009ff8"/><stop offset="0.4857" stop-color="#009cf9"/><stop offset="0.5143" stop-color="#0099fa"/><stop offset="0.5429" stop-color="#0095fc"/><stop offset="0.5714" stop-color="#0093fd"/><stop offset="0.6000" stop-color="#0091ff"/><stop offset="0.6286" stop-color="#0091ff"/><stop offset="0.6571" stop-color="#0091ff"/><stop offset="0.6857" stop-color="#008eff"/><stop offset="0.7143" stop-color="#0086ff"/><stop offset="0.7429" stop-color="#007cfc"/><stop offset="0.7714" stop-color="#0072f7"/><stop offset="0.8000" stop-color="#016af1"/><stop offset="0.8286" stop-color="#025fe4"/><stop offset="0.8571" stop-color="#0355d8"/><stop offset="0.8857" stop-color="#044ecf"/><stop offset="0.9143" stop-color="#0548c8"/><stop offset="0.9429" stop-color="#0544c3"/><stop offset="0.9714" stop-color="#0541bf"/><stop offset="1.0000" stop-color="#063dbb"/></linearGradient><linearGradient id="r22" gradientUnits="userSpaceOnUse" x1="-48" y1="0" x2="1072" y2="0"><stop offset="0.0000" stop-color="#00b1fc"/><stop offset="0.0286" stop-color="#00b0fc"/><stop offset="0.0571" stop-color="#00b0fc"/><stop offset="0.0857" stop-color="#00b0fc"/><stop offset="0.1143" stop-color="#00b0fc"/><stop offset="0.1429" stop-color="#00b0fc"/><stop offset="0.1714" stop-color="#00b0fc"/><stop offset="0.2000" stop-color="#00b0fc"/><stop offset="0.2286" stop-color="#00affc"/><stop offset="0.2571" stop-color="#00aefb"/><stop offset="0.2857" stop-color="#00adfb"/><stop offset="0.3143" stop-color="#00acfa"/><stop offset="0.3429" stop-color="#00aafa"/><stop offset="0.3714" stop-color="#00a8f9"/><stop offset="0.4000" stop-color="#00a5f9"/><stop offset="0.4286" stop-color="#00a3f9"/><stop offset="0.4571" stop-color="#00a0f9"/><stop offset="0.4857" stop-color="#009dfa"/><stop offset="0.5143" stop-color="#009afb"/><stop offset="0.5429" stop-color="#0097fd"/><stop offset="0.5714" stop-color="#0095fe"/><stop offset="0.6000" stop-color="#0093ff"/><stop offset="0.6286" stop-color="#0092ff"/><stop offset="0.6571" stop-color="#0091ff"/><stop offset="0.6857" stop-color="#008dff"/><stop offset="0.7143" stop-color="#0086ff"/><stop offset="0.7429" stop-color="#007dfc"/><stop offset="0.7714" stop-color="#0073f6"/><stop offset="0.8000" stop-color="#0169ef"/><stop offset="0.8286" stop-color="#025de2"/><stop offset="0.8571" stop-color="#0353d6"/><stop offset="0.8857" stop-color="#044ccd"/><stop offset="0.9143" stop-color="#0548c7"/><stop offset="0.9429" stop-color="#0544c2"/><stop offset="0.9714" stop-color="#0540be"/><stop offset="1.0000" stop-color="#063dbb"/></linearGradient><linearGradient id="r23" gradientUnits="userSpaceOnUse" x1="-48" y1="0" x2="1072" y2="0"><stop offset="0.0000" stop-color="#00b1fd"/><stop offset="0.0286" stop-color="#00b1fc"/><stop offset="0.0571" stop-color="#00b1fc"/><stop offset="0.0857" stop-color="#00b1fc"/><stop offset="0.1143" stop-color="#00b1fc"/><stop offset="0.1429" stop-color="#00b1fc"/><stop offset="0.1714" stop-color="#00b1fc"/><stop offset="0.2000" stop-color="#00b1fc"/><stop offset="0.2286" stop-color="#00b0fc"/><stop offset="0.2571" stop-color="#00affc"/><stop offset="0.2857" stop-color="#00aefb"/><stop offset="0.3143" stop-color="#00acfa"/><stop offset="0.3429" stop-color="#00aafa"/><stop offset="0.3714" stop-color="#00a8f9"/><stop offset="0.4000" stop-color="#00a6f9"/><stop offset="0.4286" stop-color="#00a4f9"/><stop offset="0.4571" stop-color="#00a1f9"/><stop offset="0.4857" stop-color="#009efa"/><stop offset="0.5143" stop-color="#009bfb"/><stop offset="0.5429" stop-color="#0099fd"/><stop offset="0.5714" stop-color="#0096fe"/><stop offset="0.6000" stop-color="#0095ff"/><stop offset="0.6286" stop-color="#0093ff"/><stop offset="0.6571" stop-color="#0091ff"/><stop offset="0.6857" stop-color="#008dff"/><stop offset="0.7143" stop-color="#0085fe"/><stop offset="0.7429" stop-color="#007cfa"/><stop offset="0.7714" stop-color="#0072f4"/><stop offset="0.8000" stop-color="#0168eb"/><stop offset="0.8286" stop-color="#025bdf"/><stop offset="0.8571" stop-color="#0351d4"/><stop offset="0.8857" stop-color="#044bcc"/><stop offset="0.9143" stop-color="#0547c6"/><stop offset="0.9429" stop-color="#0543c2"/><stop offset="0.9714" stop-color="#0640be"/><stop offset="1.0000" stop-color="#063dbb"/></linearGradient><linearGradient id="r24" gradientUnits="userSpaceOnUse" x1="-48" y1="0" x2="1072" y2="0"><stop offset="0.0000" stop-color="#00b2fd"/><stop offset="0.0286" stop-color="#00b2fd"/><stop offset="0.0571" stop-color="#00b2fd"/><stop offset="0.0857" stop-color="#00b2fc"/><stop offset="0.1143" stop-color="#00b2fc"/><stop offset="0.1429" stop-color="#00b2fc"/><stop offset="0.1714" stop-color="#00b2fc"/><stop offset="0.2000" stop-color="#00b1fc"/><stop offset="0.2286" stop-color="#00b1fc"/><stop offset="0.2571" stop-color="#00b0fc"/><stop offset="0.2857" stop-color="#00affb"/><stop offset="0.3143" stop-color="#00adfb"/><stop offset="0.3429" stop-color="#00abfa"/><stop offset="0.3714" stop-color="#00a9fa"/><stop offset="0.4000" stop-color="#00a7f9"/><stop offset="0.4286" stop-color="#00a5f9"/><stop offset="0.4571" stop-color="#00a2fa"/><stop offset="0.4857" stop-color="#009ffa"/><stop offset="0.5143" stop-color="#009cfb"/><stop offset="0.5429" stop-color="#009afc"/><stop offset="0.5714" stop-color="#0098fd"/><stop offset="0.6000" stop-color="#0096fe"/><stop offset="0.6286" stop-color="#0094ff"/><stop offset="0.6571" stop-color="#0091ff"/><stop offset="0.6857" stop-color="#008bfe"/><stop offset="0.7143" stop-color="#0084fb"/><stop offset="0.7429" stop-color="#007bf7"/><stop offset="0.7714" stop-color="#0071f1"/><stop offset="0.8000" stop-color="#0165e7"/><stop offset="0.8286" stop-color="#0359dc"/><stop offset="0.8571" stop-color="#044fd1"/><stop offset="0.8857" stop-color="#0449ca"/><stop offset="0.9143" stop-color="#0546c5"/><stop offset="0.9429" stop-color="#0543c1"/><stop offset="0.9714" stop-color="#0640be"/><stop offset="1.0000" stop-color="#063dbb"/></linearGradient><linearGradient id="r25" gradientUnits="userSpaceOnUse" x1="-48" y1="0" x2="1072" y2="0"><stop offset="0.0000" stop-color="#00b2fd"/><stop offset="0.0286" stop-color="#00b2fd"/><stop offset="0.0571" stop-color="#00b2fd"/><stop offset="0.0857" stop-color="#00b2fd"/><stop offset="0.1143" stop-color="#00b2fd"/><stop offset="0.1429" stop-color="#00b3fd"/><stop offset="0.1714" stop-color="#00b3fc"/><stop offset="0.2000" stop-color="#00b2fc"/><stop offset="0.2286" stop-color="#00b2fc"/><stop offset="0.2571" stop-color="#00b1fc"/><stop offset="0.2857" stop-color="#00affb"/><stop offset="0.3143" stop-color="#00aefb"/><stop offset="0.3429" stop-color="#00acfa"/><stop offset="0.3714" stop-color="#00aafa"/><stop offset="0.4000" stop-color="#00a8f9"/><stop offset="0.4286" stop-color="#00a5f9"/><stop offset="0.4571" stop-color="#00a3fa"/><stop offset="0.4857" stop-color="#00a0fa"/><stop offset="0.5143" stop-color="#009dfb"/><stop offset="0.5429" stop-color="#009bfc"/><stop offset="0.5714" stop-color="#0098fc"/><stop offset="0.6000" stop-color="#0096fd"/><stop offset="0.6286" stop-color="#0094fd"/><stop offset="0.6571" stop-color="#0090fd"/><stop offset="0.6857" stop-color="#008afb"/><stop offset="0.7143" stop-color="#0082f8"/><stop offset="0.7429" stop-color="#0079f3"/><stop offset="0.7714" stop-color="#006eed"/><stop offset="0.8000" stop-color="#0163e4"/><stop offset="0.8286" stop-color="#0357d8"/><stop offset="0.8571" stop-color="#044dce"/><stop offset="0.8857" stop-color="#0548c9"/><stop offset="0.9143" stop-color="#0545c4"/><stop offset="0.9429" stop-color="#0543c1"/><stop offset="0.9714" stop-color="#063fbd"/><stop offset="1.0000" stop-color="#063cba"/></linearGradient><linearGradient id="r26" gradientUnits="userSpaceOnUse" x1="-48" y1="0" x2="1072" y2="0"><stop offset="0.0000" stop-color="#00b3fd"/><stop offset="0.0286" stop-color="#00b3fd"/><stop offset="0.0571" stop-color="#00b3fd"/><stop offset="0.0857" stop-color="#00b3fd"/><stop offset="0.1143" stop-color="#00b3fd"/><stop offset="0.1429" stop-color="#00b3fd"/><stop offset="0.1714" stop-color="#00b3fd"/><stop offset="0.2000" stop-color="#00b3fc"/><stop offset="0.2286" stop-color="#00b2fc"/><stop offset="0.2571" stop-color="#00b1fc"/><stop offset="0.2857" stop-color="#00b0fb"/><stop offset="0.3143" stop-color="#00aefb"/><stop offset="0.3429" stop-color="#00acfa"/><stop offset="0.3714" stop-color="#00aafa"/><stop offset="0.4000" stop-color="#00a8f9"/><stop offset="0.4286" stop-color="#00a6f9"/><stop offset="0.4571" stop-color="#00a3f9"/><stop offset="0.4857" stop-color="#00a0fa"/><stop offset="0.5143" stop-color="#009efa"/><stop offset="0.5429" stop-color="#009bfa"/><stop offset="0.5714" stop-color="#0099fb"/><stop offset="0.6000" stop-color="#0096fb"/><stop offset="0.6286" stop-color="#0093fb"/><stop offset="0.6571" stop-color="#008efa"/><stop offset="0.6857" stop-color="#0088f8"/><stop offset="0.7143" stop-color="#007ff4"/><stop offset="0.7429" stop-color="#0076ef"/><stop offset="0.7714" stop-color="#006ce9"/><stop offset="0.8000" stop-color="#0261e0"/><stop offset="0.8286" stop-color="#0355d6"/><stop offset="0.8571" stop-color="#044ccd"/><stop offset="0.8857" stop-color="#0548c7"/><stop offset="0.9143" stop-color="#0545c3"/><stop offset="0.9429" stop-color="#0542c0"/><stop offset="0.9714" stop-color="#063fbd"/><stop offset="1.0000" stop-color="#063cba"/></linearGradient><linearGradient id="r27" gradientUnits="userSpaceOnUse" x1="-48" y1="0" x2="1072" y2="0"><stop offset="0.0000" stop-color="#00b3fd"/><stop offset="0.0286" stop-color="#00b3fd"/><stop offset="0.0571" stop-color="#00b3fd"/><stop offset="0.0857" stop-color="#00b3fd"/><stop offset="0.1143" stop-color="#00b4fd"/><stop offset="0.1429" stop-color="#00b4fd"/><stop offset="0.1714" stop-color="#00b4fd"/><stop offset="0.2000" stop-color="#00b4fd"/><stop offset="0.2286" stop-color="#00b3fc"/><stop offset="0.2571" stop-color="#00b2fc"/><stop offset="0.2857" stop-color="#00b1fb"/><stop offset="0.3143" stop-color="#00affb"/><stop offset="0.3429" stop-color="#00adfa"/><stop offset="0.3714" stop-color="#00abf9"/><stop offset="0.4000" stop-color="#00a8f9"/><stop offset="0.4286" stop-color="#00a6f9"/><stop offset="0.4571" stop-color="#00a3f9"/><stop offset="0.4857" stop-color="#00a1f9"/><stop offset="0.5143" stop-color="#009ef9"/><stop offset="0.5429" stop-color="#009bf9"/><stop offset="0.5714" stop-color="#0099f9"/><stop offset="0.6000" stop-color="#0096f9"/><stop offset="0.6286" stop-color="#0092f8"/><stop offset="0.6571" stop-color="#008df6"/><stop offset="0.6857" stop-color="#0085f4"/><stop offset="0.7143" stop-color="#007df0"/><stop offset="0.7429" stop-color="#0073eb"/><stop offset="0.7714" stop-color="#016ae5"/><stop offset="0.8000" stop-color="#025fdd"/><stop offset="0.8286" stop-color="#0355d4"/><stop offset="0.8571" stop-color="#044ccc"/><stop offset="0.8857" stop-color="#0547c6"/><stop offset="0.9143" stop-color="#0544c3"/><stop offset="0.9429" stop-color="#0542c0"/><stop offset="0.9714" stop-color="#063fbc"/><stop offset="1.0000" stop-color="#063bb9"/></linearGradient><linearGradient id="r28" gradientUnits="userSpaceOnUse" x1="-48" y1="0" x2="1072" y2="0"><stop offset="0.0000" stop-color="#00b4fd"/><stop offset="0.0286" stop-color="#00b4fd"/><stop offset="0.0571" stop-color="#00b4fd"/><stop offset="0.0857" stop-color="#00b4fd"/><stop offset="0.1143" stop-color="#00b4fd"/><stop offset="0.1429" stop-color="#00b4fd"/><stop offset="0.1714" stop-color="#00b4fd"/><stop offset="0.2000" stop-color="#00b4fd"/><stop offset="0.2286" stop-color="#00b4fc"/><stop offset="0.2571" stop-color="#00b3fc"/><stop offset="0.2857" stop-color="#00b1fb"/><stop offset="0.3143" stop-color="#00b0fb"/><stop offset="0.3429" stop-color="#00adfa"/><stop offset="0.3714" stop-color="#00abf9"/><stop offset="0.4000" stop-color="#00a9f9"/><stop offset="0.4286" stop-color="#00a6f8"/><stop offset="0.4571" stop-color="#00a3f8"/><stop offset="0.4857" stop-color="#00a0f8"/><stop offset="0.5143" stop-color="#009ef8"/><stop offset="0.5429" stop-color="#009bf7"/><stop offset="0.5714" stop-color="#0098f7"/><stop offset="0.6000" stop-color="#0095f6"/><stop offset="0.6286" stop-color="#0091f5"/><stop offset="0.6571" stop-color="#008bf3"/><stop offset="0.6857" stop-color="#0083f0"/><stop offset="0.7143" stop-color="#007aec"/><stop offset="0.7429" stop-color="#0070e7"/><stop offset="0.7714" stop-color="#0167e1"/><stop offset="0.8000" stop-color="#025eda"/><stop offset="0.8286" stop-color="#0354d2"/><stop offset="0.8571" stop-color="#044dcb"/><stop offset="0.8857" stop-color="#0547c6"/><stop offset="0.9143" stop-color="#0544c2"/><stop offset="0.9429" stop-color="#0541bf"/><stop offset="0.9714" stop-color="#063ebc"/><stop offset="1.0000" stop-color="#063bb9"/></linearGradient><linearGradient id="r29" gradientUnits="userSpaceOnUse" x1="-48" y1="0" x2="1072" y2="0"><stop offset="0.0000" stop-color="#00b4fd"/><stop offset="0.0286" stop-color="#00b4fd"/><stop offset="0.0571" stop-color="#00b4fd"/><stop offset="0.0857" stop-color="#00b4fd"/><stop offset="0.1143" stop-color="#00b5fd"/><stop offset="0.1429" stop-color="#00b5fd"/><stop offset="0.1714" stop-color="#00b5fd"/><stop offset="0.2000" stop-color="#00b5fc"/><stop offset="0.2286" stop-color="#00b4fc"/><stop offset="0.2571" stop-color="#00b3fc"/><stop offset="0.2857" stop-color="#00b2fb"/><stop offset="0.3143" stop-color="#00b0fa"/><stop offset="0.3429" stop-color="#00aefa"/><stop offset="0.3714" stop-color="#00acf9"/><stop offset="0.4000" stop-color="#00a9f8"/><stop offset="0.4286" stop-color="#00a6f8"/><stop offset="0.4571" stop-color="#00a3f7"/><stop offset="0.4857" stop-color="#00a0f7"/><stop offset="0.5143" stop-color="#009df6"/><stop offset="0.5429" stop-color="#009af6"/><stop offset="0.5714" stop-color="#0098f5"/><stop offset="0.6000" stop-color="#0094f3"/><stop offset="0.6286" stop-color="#0090f2"/><stop offset="0.6571" stop-color="#0089ef"/><stop offset="0.6857" stop-color="#0080ec"/><stop offset="0.7143" stop-color="#0077e8"/><stop offset="0.7429" stop-color="#006de3"/><stop offset="0.7714" stop-color="#0165de"/><stop offset="0.8000" stop-color="#025dd7"/><stop offset="0.8286" stop-color="#0354d0"/><stop offset="0.8571" stop-color="#044dca"/><stop offset="0.8857" stop-color="#0547c5"/><stop offset="0.9143" stop-color="#0544c1"/><stop offset="0.9429" stop-color="#0541be"/><stop offset="0.9714" stop-color="#063ebb"/><stop offset="1.0000" stop-color="#063ab9"/></linearGradient><linearGradient id="r30" gradientUnits="userSpaceOnUse" x1="-48" y1="0" x2="1072" y2="0"><stop offset="0.0000" stop-color="#00b4fd"/><stop offset="0.0286" stop-color="#00b4fd"/><stop offset="0.0571" stop-color="#00b4fd"/><stop offset="0.0857" stop-color="#00b5fd"/><stop offset="0.1143" stop-color="#00b5fd"/><stop offset="0.1429" stop-color="#00b5fd"/><stop offset="0.1714" stop-color="#00b5fc"/><stop offset="0.2000" stop-color="#00b5fc"/><stop offset="0.2286" stop-color="#00b5fc"/><stop offset="0.2571" stop-color="#00b4fc"/><stop offset="0.2857" stop-color="#00b2fb"/><stop offset="0.3143" stop-color="#00b1fa"/><stop offset="0.3429" stop-color="#00aef9"/><stop offset="0.3714" stop-color="#00acf9"/><stop offset="0.4000" stop-color="#00a9f8"/><stop offset="0.4286" stop-color="#00a6f7"/><stop offset="0.4571" stop-color="#00a3f6"/><stop offset="0.4857" stop-color="#00a0f5"/><stop offset="0.5143" stop-color="#009cf5"/><stop offset="0.5429" stop-color="#0099f4"/><stop offset="0.5714" stop-color="#0096f2"/><stop offset="0.6000" stop-color="#0093f1"/><stop offset="0.6286" stop-color="#008eee"/><stop offset="0.6571" stop-color="#0087eb"/><stop offset="0.6857" stop-color="#007de8"/><stop offset="0.7143" stop-color="#0073e3"/><stop offset="0.7429" stop-color="#006adf"/><stop offset="0.7714" stop-color="#0163da"/><stop offset="0.8000" stop-color="#025bd5"/><stop offset="0.8286" stop-color="#0354cf"/><stop offset="0.8571" stop-color="#044dc9"/><stop offset="0.8857" stop-color="#0547c4"/><stop offset="0.9143" stop-color="#0544c1"/><stop offset="0.9429" stop-color="#0540be"/><stop offset="0.9714" stop-color="#063dbb"/><stop offset="1.0000" stop-color="#063ab8"/></linearGradient><linearGradient id="r31" gradientUnits="userSpaceOnUse" x1="-48" y1="0" x2="1072" y2="0"><stop offset="0.0000" stop-color="#00b4fd"/><stop offset="0.0286" stop-color="#00b4fd"/><stop offset="0.0571" stop-color="#00b5fd"/><stop offset="0.0857" stop-color="#00b5fd"/><stop offset="0.1143" stop-color="#00b5fc"/><stop offset="0.1429" stop-color="#00b6fc"/><stop offset="0.1714" stop-color="#00b6fc"/><stop offset="0.2000" stop-color="#00b6fc"/><stop offset="0.2286" stop-color="#00b5fc"/><stop offset="0.2571" stop-color="#00b4fb"/><stop offset="0.2857" stop-color="#00b3fb"/><stop offset="0.3143" stop-color="#00b1fa"/><stop offset="0.3429" stop-color="#00aff9"/><stop offset="0.3714" stop-color="#00acf8"/><stop offset="0.4000" stop-color="#00a9f7"/><stop offset="0.4286" stop-color="#00a6f6"/><stop offset="0.4571" stop-color="#00a3f5"/><stop offset="0.4857" stop-color="#009ff4"/><stop offset="0.5143" stop-color="#009cf3"/><stop offset="0.5429" stop-color="#0098f1"/><stop offset="0.5714" stop-color="#0095f0"/><stop offset="0.6000" stop-color="#0091ee"/><stop offset="0.6286" stop-color="#008deb"/><stop offset="0.6571" stop-color="#0085e8"/><stop offset="0.6857" stop-color="#007ae4"/><stop offset="0.7143" stop-color="#0070e0"/><stop offset="0.7429" stop-color="#0167db"/><stop offset="0.7714" stop-color="#0261d8"/><stop offset="0.8000" stop-color="#025ad3"/><stop offset="0.8286" stop-color="#0353cd"/><stop offset="0.8571" stop-color="#044cc8"/><stop offset="0.8857" stop-color="#0547c4"/><stop offset="0.9143" stop-color="#0543c0"/><stop offset="0.9429" stop-color="#0640bd"/><stop offset="0.9714" stop-color="#063dba"/><stop offset="1.0000" stop-color="#063ab8"/></linearGradient><linearGradient id="r32" gradientUnits="userSpaceOnUse" x1="-48" y1="0" x2="1072" y2="0"><stop offset="0.0000" stop-color="#00b5fd"/><stop offset="0.0286" stop-color="#00b5fd"/><stop offset="0.0571" stop-color="#00b5fc"/><stop offset="0.0857" stop-color="#00b5fc"/><stop offset="0.1143" stop-color="#00b5fc"/><stop offset="0.1429" stop-color="#00b6fc"/><stop offset="0.1714" stop-color="#00b6fc"/><stop offset="0.2000" stop-color="#00b6fc"/><stop offset="0.2286" stop-color="#00b5fc"/><stop offset="0.2571" stop-color="#00b5fb"/><stop offset="0.2857" stop-color="#00b3fb"/><stop offset="0.3143" stop-color="#00b1fa"/><stop offset="0.3429" stop-color="#00aff9"/><stop offset="0.3714" stop-color="#00acf8"/><stop offset="0.4000" stop-color="#00a9f6"/><stop offset="0.4286" stop-color="#00a6f5"/><stop offset="0.4571" stop-color="#00a2f4"/><stop offset="0.4857" stop-color="#009ef3"/><stop offset="0.5143" stop-color="#009af1"/><stop offset="0.5429" stop-color="#0097ef"/><stop offset="0.5714" stop-color="#0093ed"/><stop offset="0.6000" stop-color="#008feb"/><stop offset="0.6286" stop-color="#008be8"/><stop offset="0.6571" stop-color="#0082e5"/><stop offset="0.6857" stop-color="#0078e1"/><stop offset="0.7143" stop-color="#006ddc"/><stop offset="0.7429" stop-color="#0164d8"/><stop offset="0.7714" stop-color="#025fd5"/><stop offset="0.8000" stop-color="#0259d1"/><stop offset="0.8286" stop-color="#0352cc"/><stop offset="0.8571" stop-color="#044cc7"/><stop offset="0.8857" stop-color="#0547c3"/><stop offset="0.9143" stop-color="#0543c0"/><stop offset="0.9429" stop-color="#0640bd"/><stop offset="0.9714" stop-color="#063cba"/><stop offset="1.0000" stop-color="#0639b7"/></linearGradient><linearGradient id="r33" gradientUnits="userSpaceOnUse" x1="-48" y1="0" x2="1072" y2="0"><stop offset="0.0000" stop-color="#00b5fd"/><stop offset="0.0286" stop-color="#00b5fc"/><stop offset="0.0571" stop-color="#00b5fc"/><stop offset="0.0857" stop-color="#00b5fc"/><stop offset="0.1143" stop-color="#00b6fc"/><stop offset="0.1429" stop-color="#00b6fc"/><stop offset="0.1714" stop-color="#00b6fc"/><stop offset="0.2000" stop-color="#00b6fc"/><stop offset="0.2286" stop-color="#00b6fb"/><stop offset="0.2571" stop-color="#00b5fb"/><stop offset="0.2857" stop-color="#00b4fa"/><stop offset="0.3143" stop-color="#00b2f9"/><stop offset="0.3429" stop-color="#00aff8"/><stop offset="0.3714" stop-color="#00acf7"/><stop offset="0.4000" stop-color="#00a9f6"/><stop offset="0.4286" stop-color="#00a6f4"/><stop offset="0.4571" stop-color="#00a2f3"/><stop offset="0.4857" stop-color="#009df1"/><stop offset="0.5143" stop-color="#0099ef"/><stop offset="0.5429" stop-color="#0095ed"/><stop offset="0.5714" stop-color="#0091eb"/><stop offset="0.6000" stop-color="#008de8"/><stop offset="0.6286" stop-color="#0088e5"/><stop offset="0.6571" stop-color="#007fe2"/><stop offset="0.6857" stop-color="#0075de"/><stop offset="0.7143" stop-color="#006bda"/><stop offset="0.7429" stop-color="#0163d6"/><stop offset="0.7714" stop-color="#025ed3"/><stop offset="0.8000" stop-color="#0359d0"/><stop offset="0.8286" stop-color="#0351ca"/><stop offset="0.8571" stop-color="#044bc6"/><stop offset="0.8857" stop-color="#0546c2"/><stop offset="0.9143" stop-color="#0543bf"/><stop offset="0.9429" stop-color="#063fbc"/><stop offset="0.9714" stop-color="#063cba"/><stop offset="1.0000" stop-color="#0639b7"/></linearGradient><linearGradient id="r34" gradientUnits="userSpaceOnUse" x1="-48" y1="0" x2="1072" y2="0"><stop offset="0.0000" stop-color="#00b5fc"/><stop offset="0.0286" stop-color="#00b5fc"/><stop offset="0.0571" stop-color="#00b5fc"/><stop offset="0.0857" stop-color="#00b5fc"/><stop offset="0.1143" stop-color="#00b6fc"/><stop offset="0.1429" stop-color="#00b6fc"/><stop offset="0.1714" stop-color="#00b6fb"/><stop offset="0.2000" stop-color="#00b6fb"/><stop offset="0.2286" stop-color="#00b6fb"/><stop offset="0.2571" stop-color="#00b5fa"/><stop offset="0.2857" stop-color="#00b4fa"/><stop offset="0.3143" stop-color="#00b2f9"/><stop offset="0.3429" stop-color="#00aff8"/><stop offset="0.3714" stop-color="#00acf6"/><stop offset="0.4000" stop-color="#00a9f5"/><stop offset="0.4286" stop-color="#00a5f3"/><stop offset="0.4571" stop-color="#00a1f1"/><stop offset="0.4857" stop-color="#009cf0"/><stop offset="0.5143" stop-color="#0098ee"/><stop offset="0.5429" stop-color="#0093eb"/><stop offset="0.5714" stop-color="#008fe9"/><stop offset="0.6000" stop-color="#008ae6"/><stop offset="0.6286" stop-color="#0085e3"/><stop offset="0.6571" stop-color="#007cdf"/><stop offset="0.6857" stop-color="#0072db"/><stop offset="0.7143" stop-color="#0169d8"/><stop offset="0.7429" stop-color="#0162d4"/><stop offset="0.7714" stop-color="#025dd2"/><stop offset="0.8000" stop-color="#0358ce"/><stop offset="0.8286" stop-color="#0450c9"/><stop offset="0.8571" stop-color="#044ac5"/><stop offset="0.8857" stop-color="#0546c1"/><stop offset="0.9143" stop-color="#0542bf"/><stop offset="0.9429" stop-color="#063fbc"/><stop offset="0.9714" stop-color="#063bb9"/><stop offset="1.0000" stop-color="#0638b7"/></linearGradient><linearGradient id="r35" gradientUnits="userSpaceOnUse" x1="-48" y1="0" x2="1072" y2="0"><stop offset="0.0000" stop-color="#00b5fc"/><stop offset="0.0286" stop-color="#00b5fc"/><stop offset="0.0571" stop-color="#00b5fc"/><stop offset="0.0857" stop-color="#00b5fb"/><stop offset="0.1143" stop-color="#00b5fb"/><stop offset="0.1429" stop-color="#00b6fb"/><stop offset="0.1714" stop-color="#00b6fb"/><stop offset="0.2000" stop-color="#00b6fb"/><stop offset="0.2286" stop-color="#00b6fb"/><stop offset="0.2571" stop-color="#00b5fa"/><stop offset="0.2857" stop-color="#00b4f9"/><stop offset="0.3143" stop-color="#00b2f8"/><stop offset="0.3429" stop-color="#00aff7"/><stop offset="0.3714" stop-color="#00acf6"/><stop offset="0.4000" stop-color="#00a9f4"/><stop offset="0.4286" stop-color="#00a5f2"/><stop offset="0.4571" stop-color="#00a0f0"/><stop offset="0.4857" stop-color="#009bee"/><stop offset="0.5143" stop-color="#0096ec"/><stop offset="0.5429" stop-color="#0091ea"/><stop offset="0.5714" stop-color="#008ce7"/><stop offset="0.6000" stop-color="#0088e4"/><stop offset="0.6286" stop-color="#0081e1"/><stop offset="0.6571" stop-color="#0079dd"/><stop offset="0.6857" stop-color="#0070d9"/><stop offset="0.7143" stop-color="#0168d6"/><stop offset="0.7429" stop-color="#0162d3"/><stop offset="0.7714" stop-color="#025dd1"/><stop offset="0.8000" stop-color="#0357cd"/><stop offset="0.8286" stop-color="#044fc8"/><stop offset="0.8571" stop-color="#0449c4"/><stop offset="0.8857" stop-color="#0545c1"/><stop offset="0.9143" stop-color="#0542be"/><stop offset="0.9429" stop-color="#063ebc"/><stop offset="0.9714" stop-color="#063bb9"/><stop offset="1.0000" stop-color="#0738b6"/></linearGradient><linearGradient id="r36" gradientUnits="userSpaceOnUse" x1="-48" y1="0" x2="1072" y2="0"><stop offset="0.0000" stop-color="#00b5fc"/><stop offset="0.0286" stop-color="#00b5fc"/><stop offset="0.0571" stop-color="#00b5fb"/><stop offset="0.0857" stop-color="#00b5fb"/><stop offset="0.1143" stop-color="#00b5fb"/><stop offset="0.1429" stop-color="#00b6fb"/><stop offset="0.1714" stop-color="#00b6fb"/><stop offset="0.2000" stop-color="#00b6fa"/><stop offset="0.2286" stop-color="#00b5fa"/><stop offset="0.2571" stop-color="#00b5fa"/><stop offset="0.2857" stop-color="#00b3f9"/><stop offset="0.3143" stop-color="#00b2f8"/><stop offset="0.3429" stop-color="#00aff6"/><stop offset="0.3714" stop-color="#00acf5"/><stop offset="0.4000" stop-color="#00a8f3"/><stop offset="0.4286" stop-color="#00a4f1"/><stop offset="0.4571" stop-color="#00a0ef"/><stop offset="0.4857" stop-color="#009bed"/><stop offset="0.5143" stop-color="#0095ea"/><stop offset="0.5429" stop-color="#008fe8"/><stop offset="0.5714" stop-color="#008ae5"/><stop offset="0.6000" stop-color="#0085e2"/><stop offset="0.6286" stop-color="#007fdf"/><stop offset="0.6571" stop-color="#0077db"/><stop offset="0.6857" stop-color="#006fd8"/><stop offset="0.7143" stop-color="#0168d5"/><stop offset="0.7429" stop-color="#0162d3"/><stop offset="0.7714" stop-color="#025cd0"/><stop offset="0.8000" stop-color="#0356cc"/><stop offset="0.8286" stop-color="#044ec7"/><stop offset="0.8571" stop-color="#0548c3"/><stop offset="0.8857" stop-color="#0545c0"/><stop offset="0.9143" stop-color="#0541be"/><stop offset="0.9429" stop-color="#063ebb"/><stop offset="0.9714" stop-color="#063bb9"/><stop offset="1.0000" stop-color="#0737b6"/></linearGradient><linearGradient id="r37" gradientUnits="userSpaceOnUse" x1="-48" y1="0" x2="1072" y2="0"><stop offset="0.0000" stop-color="#00b5fb"/><stop offset="0.0286" stop-color="#00b4fb"/><stop offset="0.0571" stop-color="#00b4fb"/><stop offset="0.0857" stop-color="#00b5fb"/><stop offset="0.1143" stop-color="#00b5fb"/><stop offset="0.1429" stop-color="#00b5fa"/><stop offset="0.1714" stop-color="#00b5fa"/><stop offset="0.2000" stop-color="#00b5fa"/><stop offset="0.2286" stop-color="#00b5f9"/><stop offset="0.2571" stop-color="#00b4f9"/><stop offset="0.2857" stop-color="#00b3f8"/><stop offset="0.3143" stop-color="#00b1f7"/><stop offset="0.3429" stop-color="#00aff6"/><stop offset="0.3714" stop-color="#00abf4"/><stop offset="0.4000" stop-color="#00a8f2"/><stop offset="0.4286" stop-color="#00a3f0"/><stop offset="0.4571" stop-color="#009fee"/><stop offset="0.4857" stop-color="#009aec"/><stop offset="0.5143" stop-color="#0094e9"/><stop offset="0.5429" stop-color="#008ee6"/><stop offset="0.5714" stop-color="#0089e3"/><stop offset="0.6000" stop-color="#0083e0"/><stop offset="0.6286" stop-color="#007ddd"/><stop offset="0.6571" stop-color="#0076da"/><stop offset="0.6857" stop-color="#006ed7"/><stop offset="0.7143" stop-color="#0167d5"/><stop offset="0.7429" stop-color="#0162d2"/><stop offset="0.7714" stop-color="#025ccf"/><stop offset="0.8000" stop-color="#0355cb"/><stop offset="0.8286" stop-color="#044ec6"/><stop offset="0.8571" stop-color="#0548c3"/><stop offset="0.8857" stop-color="#0545c0"/><stop offset="0.9143" stop-color="#0541be"/><stop offset="0.9429" stop-color="#063ebb"/><stop offset="0.9714" stop-color="#063bb8"/><stop offset="1.0000" stop-color="#0737b6"/></linearGradient><linearGradient id="r38" gradientUnits="userSpaceOnUse" x1="-48" y1="0" x2="1072" y2="0"><stop offset="0.0000" stop-color="#00b4fb"/><stop offset="0.0286" stop-color="#00b4fb"/><stop offset="0.0571" stop-color="#00b4fb"/><stop offset="0.0857" stop-color="#00b4fa"/><stop offset="0.1143" stop-color="#00b5fa"/><stop offset="0.1429" stop-color="#00b5fa"/><stop offset="0.1714" stop-color="#00b5fa"/><stop offset="0.2000" stop-color="#00b5f9"/><stop offset="0.2286" stop-color="#00b5f9"/><stop offset="0.2571" stop-color="#00b4f8"/><stop offset="0.2857" stop-color="#00b3f8"/><stop offset="0.3143" stop-color="#00b1f6"/><stop offset="0.3429" stop-color="#00aef5"/><stop offset="0.3714" stop-color="#00abf3"/><stop offset="0.4000" stop-color="#00a7f1"/><stop offset="0.4286" stop-color="#00a3ef"/><stop offset="0.4571" stop-color="#009eed"/><stop offset="0.4857" stop-color="#0099ea"/><stop offset="0.5143" stop-color="#0093e8"/><stop offset="0.5429" stop-color="#008de5"/><stop offset="0.5714" stop-color="#0088e2"/><stop offset="0.6000" stop-color="#0082df"/><stop offset="0.6286" stop-color="#007cdc"/><stop offset="0.6571" stop-color="#0074d9"/><stop offset="0.6857" stop-color="#006dd6"/><stop offset="0.7143" stop-color="#0167d4"/><stop offset="0.7429" stop-color="#0162d2"/><stop offset="0.7714" stop-color="#025cce"/><stop offset="0.8000" stop-color="#0355ca"/><stop offset="0.8286" stop-color="#044ec6"/><stop offset="0.8571" stop-color="#0449c3"/><stop offset="0.8857" stop-color="#0545c0"/><stop offset="0.9143" stop-color="#0542be"/><stop offset="0.9429" stop-color="#063ebb"/><stop offset="0.9714" stop-color="#063ab8"/><stop offset="1.0000" stop-color="#0737b5"/></linearGradient><linearGradient id="r39" gradientUnits="userSpaceOnUse" x1="-48" y1="0" x2="1072" y2="0"><stop offset="0.0000" stop-color="#00b4fb"/><stop offset="0.0286" stop-color="#00b4fa"/><stop offset="0.0571" stop-color="#00b4fa"/><stop offset="0.0857" stop-color="#00b4fa"/><stop offset="0.1143" stop-color="#00b4fa"/><stop offset="0.1429" stop-color="#00b4f9"/><stop offset="0.1714" stop-color="#00b4f9"/><stop offset="0.2000" stop-color="#00b4f9"/><stop offset="0.2286" stop-color="#00b4f8"/><stop offset="0.2571" stop-color="#00b3f8"/><stop offset="0.2857" stop-color="#00b2f7"/><stop offset="0.3143" stop-color="#00b0f6"/><stop offset="0.3429" stop-color="#00adf4"/><stop offset="0.3714" stop-color="#00aaf2"/><stop offset="0.4000" stop-color="#00a6f0"/><stop offset="0.4286" stop-color="#00a2ee"/><stop offset="0.4571" stop-color="#009dec"/><stop offset="0.4857" stop-color="#0098e9"/><stop offset="0.5143" stop-color="#0092e7"/><stop offset="0.5429" stop-color="#008ce4"/><stop offset="0.5714" stop-color="#0087e1"/><stop offset="0.6000" stop-color="#0081dd"/><stop offset="0.6286" stop-color="#007bdb"/><stop offset="0.6571" stop-color="#0074d8"/><stop offset="0.6857" stop-color="#006dd6"/><stop offset="0.7143" stop-color="#0167d3"/><stop offset="0.7429" stop-color="#0162d1"/><stop offset="0.7714" stop-color="#025cce"/><stop offset="0.8000" stop-color="#0355ca"/><stop offset="0.8286" stop-color="#044fc6"/><stop offset="0.8571" stop-color="#044ac3"/><stop offset="0.8857" stop-color="#0546c0"/><stop offset="0.9143" stop-color="#0542be"/><stop offset="0.9429" stop-color="#063ebb"/><stop offset="0.9714" stop-color="#063ab8"/><stop offset="1.0000" stop-color="#0736b5"/></linearGradient><linearGradient id="r40" gradientUnits="userSpaceOnUse" x1="-48" y1="0" x2="1072" y2="0"><stop offset="0.0000" stop-color="#00b4fa"/><stop offset="0.0286" stop-color="#00b4fa"/><stop offset="0.0571" stop-color="#00b3fa"/><stop offset="0.0857" stop-color="#00b4f9"/><stop offset="0.1143" stop-color="#00b4f9"/><stop offset="0.1429" stop-color="#00b4f9"/><stop offset="0.1714" stop-color="#00b4f9"/><stop offset="0.2000" stop-color="#00b4f8"/><stop offset="0.2286" stop-color="#00b3f8"/><stop offset="0.2571" stop-color="#00b2f7"/><stop offset="0.2857" stop-color="#00b1f6"/><stop offset="0.3143" stop-color="#00aff5"/><stop offset="0.3429" stop-color="#00acf3"/><stop offset="0.3714" stop-color="#00a9f1"/><stop offset="0.4000" stop-color="#00a5ef"/><stop offset="0.4286" stop-color="#00a1ed"/><stop offset="0.4571" stop-color="#009ceb"/><stop offset="0.4857" stop-color="#0097e8"/><stop offset="0.5143" stop-color="#0091e6"/><stop offset="0.5429" stop-color="#008be3"/><stop offset="0.5714" stop-color="#0086e0"/><stop offset="0.6000" stop-color="#0080dc"/><stop offset="0.6286" stop-color="#007ada"/><stop offset="0.6571" stop-color="#0073d7"/><stop offset="0.6857" stop-color="#006dd5"/><stop offset="0.7143" stop-color="#0167d3"/><stop offset="0.7429" stop-color="#0261d0"/><stop offset="0.7714" stop-color="#025ccd"/><stop offset="0.8000" stop-color="#0355c9"/><stop offset="0.8286" stop-color="#044fc5"/><stop offset="0.8571" stop-color="#044ac3"/><stop offset="0.8857" stop-color="#0546c1"/><stop offset="0.9143" stop-color="#0542be"/><stop offset="0.9429" stop-color="#063ebb"/><stop offset="0.9714" stop-color="#063ab8"/><stop offset="1.0000" stop-color="#0736b5"/></linearGradient><linearGradient id="r41" gradientUnits="userSpaceOnUse" x1="-48" y1="0" x2="1072" y2="0"><stop offset="0.0000" stop-color="#00b4fa"/><stop offset="0.0286" stop-color="#00b3fa"/><stop offset="0.0571" stop-color="#00b3f9"/><stop offset="0.0857" stop-color="#00b3f9"/><stop offset="0.1143" stop-color="#00b3f9"/><stop offset="0.1429" stop-color="#00b3f8"/><stop offset="0.1714" stop-color="#00b3f8"/><stop offset="0.2000" stop-color="#00b3f7"/><stop offset="0.2286" stop-color="#00b3f7"/><stop offset="0.2571" stop-color="#00b2f6"/><stop offset="0.2857" stop-color="#00b0f5"/><stop offset="0.3143" stop-color="#00aef4"/><stop offset="0.3429" stop-color="#00acf2"/><stop offset="0.3714" stop-color="#00a8f1"/><stop offset="0.4000" stop-color="#00a4ee"/><stop offset="0.4286" stop-color="#00a0ec"/><stop offset="0.4571" stop-color="#009bea"/><stop offset="0.4857" stop-color="#0096e7"/><stop offset="0.5143" stop-color="#0090e5"/><stop offset="0.5429" stop-color="#008be2"/><stop offset="0.5714" stop-color="#0085df"/><stop offset="0.6000" stop-color="#007fdc"/><stop offset="0.6286" stop-color="#0079d9"/><stop offset="0.6571" stop-color="#0072d7"/><stop offset="0.6857" stop-color="#006cd4"/><stop offset="0.7143" stop-color="#0166d2"/><stop offset="0.7429" stop-color="#0261cf"/><stop offset="0.7714" stop-color="#025bcc"/><stop offset="0.8000" stop-color="#0355c8"/><stop offset="0.8286" stop-color="#044fc5"/><stop offset="0.8571" stop-color="#044bc2"/><stop offset="0.8857" stop-color="#0547c0"/><stop offset="0.9143" stop-color="#0542be"/><stop offset="0.9429" stop-color="#063eba"/><stop offset="0.9714" stop-color="#063ab7"/><stop offset="1.0000" stop-color="#0736b4"/></linearGradient><linearGradient id="r42" gradientUnits="userSpaceOnUse" x1="-48" y1="0" x2="1072" y2="0"><stop offset="0.0000" stop-color="#00b3fa"/><stop offset="0.0286" stop-color="#00b3f9"/><stop offset="0.0571" stop-color="#00b3f9"/><stop offset="0.0857" stop-color="#00b3f8"/><stop offset="0.1143" stop-color="#00b3f8"/><stop offset="0.1429" stop-color="#00b3f8"/><stop offset="0.1714" stop-color="#00b3f7"/><stop offset="0.2000" stop-color="#00b2f7"/><stop offset="0.2286" stop-color="#00b2f6"/><stop offset="0.2571" stop-color="#00b1f5"/><stop offset="0.2857" stop-color="#00aff4"/><stop offset="0.3143" stop-color="#00adf3"/><stop offset="0.3429" stop-color="#00abf2"/><stop offset="0.3714" stop-color="#00a7f0"/><stop offset="0.4000" stop-color="#00a3ee"/><stop offset="0.4286" stop-color="#009feb"/><stop offset="0.4571" stop-color="#009ae9"/><stop offset="0.4857" stop-color="#0095e7"/><stop offset="0.5143" stop-color="#008fe4"/><stop offset="0.5429" stop-color="#008ae1"/><stop offset="0.5714" stop-color="#0084de"/><stop offset="0.6000" stop-color="#007edb"/><stop offset="0.6286" stop-color="#0078d9"/><stop offset="0.6571" stop-color="#0072d6"/><stop offset="0.6857" stop-color="#006cd4"/><stop offset="0.7143" stop-color="#0166d1"/><stop offset="0.7429" stop-color="#0260ce"/><stop offset="0.7714" stop-color="#025bcb"/><stop offset="0.8000" stop-color="#0355c7"/><stop offset="0.8286" stop-color="#0450c4"/><stop offset="0.8571" stop-color="#044bc2"/><stop offset="0.8857" stop-color="#0547c0"/><stop offset="0.9143" stop-color="#0542bd"/><stop offset="0.9429" stop-color="#063eba"/><stop offset="0.9714" stop-color="#0639b7"/><stop offset="1.0000" stop-color="#0736b4"/></linearGradient><linearGradient id="r43" gradientUnits="userSpaceOnUse" x1="-48" y1="0" x2="1072" y2="0"><stop offset="0.0000" stop-color="#00b3f9"/><stop offset="0.0286" stop-color="#00b3f9"/><stop offset="0.0571" stop-color="#00b2f8"/><stop offset="0.0857" stop-color="#00b2f8"/><stop offset="0.1143" stop-color="#00b2f8"/><stop offset="0.1429" stop-color="#00b2f7"/><stop offset="0.1714" stop-color="#00b2f7"/><stop offset="0.2000" stop-color="#00b2f6"/><stop offset="0.2286" stop-color="#00b1f6"/><stop offset="0.2571" stop-color="#00b0f5"/><stop offset="0.2857" stop-color="#00aef4"/><stop offset="0.3143" stop-color="#00acf2"/><stop offset="0.3429" stop-color="#00aaf1"/><stop offset="0.3714" stop-color="#00a6ef"/><stop offset="0.4000" stop-color="#00a2ed"/><stop offset="0.4286" stop-color="#009eeb"/><stop offset="0.4571" stop-color="#0099e8"/><stop offset="0.4857" stop-color="#0094e6"/><stop offset="0.5143" stop-color="#008fe3"/><stop offset="0.5429" stop-color="#0089e1"/><stop offset="0.5714" stop-color="#0083de"/><stop offset="0.6000" stop-color="#007edb"/><stop offset="0.6286" stop-color="#0077d8"/><stop offset="0.6571" stop-color="#0071d6"/><stop offset="0.6857" stop-color="#006bd3"/><stop offset="0.7143" stop-color="#0166d0"/><stop offset="0.7429" stop-color="#0260cd"/><stop offset="0.7714" stop-color="#025ac9"/><stop offset="0.8000" stop-color="#0355c6"/><stop offset="0.8286" stop-color="#0450c3"/><stop offset="0.8571" stop-color="#044bc1"/><stop offset="0.8857" stop-color="#0547bf"/><stop offset="0.9143" stop-color="#0542bc"/><stop offset="0.9429" stop-color="#063db9"/><stop offset="0.9714" stop-color="#0639b6"/><stop offset="1.0000" stop-color="#0735b3"/></linearGradient><linearGradient id="r44" gradientUnits="userSpaceOnUse" x1="-48" y1="0" x2="1072" y2="0"><stop offset="0.0000" stop-color="#00b3f9"/><stop offset="0.0286" stop-color="#00b2f8"/><stop offset="0.0571" stop-color="#00b2f8"/><stop offset="0.0857" stop-color="#00b2f7"/><stop offset="0.1143" stop-color="#00b2f7"/><stop offset="0.1429" stop-color="#00b2f7"/><stop offset="0.1714" stop-color="#00b1f6"/><stop offset="0.2000" stop-color="#00b1f6"/><stop offset="0.2286" stop-color="#00b0f5"/><stop offset="0.2571" stop-color="#00aff4"/><stop offset="0.2857" stop-color="#00adf3"/><stop offset="0.3143" stop-color="#00abf1"/><stop offset="0.3429" stop-color="#00a8f0"/><stop offset="0.3714" stop-color="#00a5ee"/><stop offset="0.4000" stop-color="#00a1ec"/><stop offset="0.4286" stop-color="#009dea"/><stop offset="0.4571" stop-color="#0098e7"/><stop offset="0.4857" stop-color="#0093e5"/><stop offset="0.5143" stop-color="#008ee3"/><stop offset="0.5429" stop-color="#0088e0"/><stop offset="0.5714" stop-color="#0083dd"/><stop offset="0.6000" stop-color="#007dda"/><stop offset="0.6286" stop-color="#0077d8"/><stop offset="0.6571" stop-color="#0071d5"/><stop offset="0.6857" stop-color="#006bd3"/><stop offset="0.7143" stop-color="#0165cf"/><stop offset="0.7429" stop-color="#0260cc"/><stop offset="0.7714" stop-color="#025ac8"/><stop offset="0.8000" stop-color="#0355c5"/><stop offset="0.8286" stop-color="#044fc2"/><stop offset="0.8571" stop-color="#044bc0"/><stop offset="0.8857" stop-color="#0546be"/><stop offset="0.9143" stop-color="#0542bb"/><stop offset="0.9429" stop-color="#063db8"/><stop offset="0.9714" stop-color="#0639b6"/><stop offset="1.0000" stop-color="#0735b3"/></linearGradient><linearGradient id="r45" gradientUnits="userSpaceOnUse" x1="-48" y1="0" x2="1072" y2="0"><stop offset="0.0000" stop-color="#00b3f9"/><stop offset="0.0286" stop-color="#00b2f8"/><stop offset="0.0571" stop-color="#00b2f7"/><stop offset="0.0857" stop-color="#00b1f7"/><stop offset="0.1143" stop-color="#00b1f6"/><stop offset="0.1429" stop-color="#00b1f6"/><stop offset="0.1714" stop-color="#00b1f5"/><stop offset="0.2000" stop-color="#00b0f5"/><stop offset="0.2286" stop-color="#00aff4"/><stop offset="0.2571" stop-color="#00aef3"/><stop offset="0.2857" stop-color="#00acf2"/><stop offset="0.3143" stop-color="#00aaf1"/><stop offset="0.3429" stop-color="#00a7ef"/><stop offset="0.3714" stop-color="#00a4ed"/><stop offset="0.4000" stop-color="#00a0eb"/><stop offset="0.4286" stop-color="#009ce9"/><stop offset="0.4571" stop-color="#0097e7"/><stop offset="0.4857" stop-color="#0092e4"/><stop offset="0.5143" stop-color="#008de2"/><stop offset="0.5429" stop-color="#0087e0"/><stop offset="0.5714" stop-color="#0082dd"/><stop offset="0.6000" stop-color="#007cda"/><stop offset="0.6286" stop-color="#0076d7"/><stop offset="0.6571" stop-color="#0070d5"/><stop offset="0.6857" stop-color="#006ad2"/><stop offset="0.7143" stop-color="#0165cf"/><stop offset="0.7429" stop-color="#025fcb"/><stop offset="0.7714" stop-color="#025ac7"/><stop offset="0.8000" stop-color="#0354c4"/><stop offset="0.8286" stop-color="#044fc1"/><stop offset="0.8571" stop-color="#044bbf"/><stop offset="0.8857" stop-color="#0546bd"/><stop offset="0.9143" stop-color="#0541bb"/><stop offset="0.9429" stop-color="#063db8"/><stop offset="0.9714" stop-color="#0639b5"/><stop offset="1.0000" stop-color="#0735b2"/></linearGradient><linearGradient id="r46" gradientUnits="userSpaceOnUse" x1="-48" y1="0" x2="1072" y2="0"><stop offset="0.0000" stop-color="#00b2f8"/><stop offset="0.0286" stop-color="#00b2f8"/><stop offset="0.0571" stop-color="#00b1f7"/><stop offset="0.0857" stop-color="#00b1f7"/><stop offset="0.1143" stop-color="#00b1f6"/><stop offset="0.1429" stop-color="#00b0f5"/><stop offset="0.1714" stop-color="#00b0f5"/><stop offset="0.2000" stop-color="#00aff4"/><stop offset="0.2286" stop-color="#00aef3"/><stop offset="0.2571" stop-color="#00adf2"/><stop offset="0.2857" stop-color="#00abf1"/><stop offset="0.3143" stop-color="#00a9f0"/><stop offset="0.3429" stop-color="#00a6ee"/><stop offset="0.3714" stop-color="#00a3ec"/><stop offset="0.4000" stop-color="#009fea"/><stop offset="0.4286" stop-color="#009be8"/><stop offset="0.4571" stop-color="#0096e6"/><stop offset="0.4857" stop-color="#0091e4"/><stop offset="0.5143" stop-color="#008ce1"/><stop offset="0.5429" stop-color="#0086df"/><stop offset="0.5714" stop-color="#0081dc"/><stop offset="0.6000" stop-color="#007bda"/><stop offset="0.6286" stop-color="#0075d7"/><stop offset="0.6571" stop-color="#0070d4"/><stop offset="0.6857" stop-color="#016ad1"/><stop offset="0.7143" stop-color="#0164ce"/><stop offset="0.7429" stop-color="#025fca"/><stop offset="0.7714" stop-color="#0259c7"/><stop offset="0.8000" stop-color="#0354c3"/><stop offset="0.8286" stop-color="#044fc1"/><stop offset="0.8571" stop-color="#044abf"/><stop offset="0.8857" stop-color="#0546bc"/><stop offset="0.9143" stop-color="#0541ba"/><stop offset="0.9429" stop-color="#063db7"/><stop offset="0.9714" stop-color="#0638b4"/><stop offset="1.0000" stop-color="#0735b2"/></linearGradient><linearGradient id="r47" gradientUnits="userSpaceOnUse" x1="-48" y1="0" x2="1072" y2="0"><stop offset="0.0000" stop-color="#00b2f8"/><stop offset="0.0286" stop-color="#00b2f7"/><stop offset="0.0571" stop-color="#00b1f7"/><stop offset="0.0857" stop-color="#00b0f6"/><stop offset="0.1143" stop-color="#00b0f6"/><stop offset="0.1429" stop-color="#00b0f5"/><stop offset="0.1714" stop-color="#00aff4"/><stop offset="0.2000" stop-color="#00aef4"/><stop offset="0.2286" stop-color="#00adf3"/><stop offset="0.2571" stop-color="#00acf2"/><stop offset="0.2857" stop-color="#00aaf0"/><stop offset="0.3143" stop-color="#00a8ef"/><stop offset="0.3429" stop-color="#00a5ed"/><stop offset="0.3714" stop-color="#00a2ec"/><stop offset="0.4000" stop-color="#009eea"/><stop offset="0.4286" stop-color="#009ae8"/><stop offset="0.4571" stop-color="#0095e5"/><stop offset="0.4857" stop-color="#0090e3"/><stop offset="0.5143" stop-color="#008be1"/><stop offset="0.5429" stop-color="#0086de"/><stop offset="0.5714" stop-color="#0080dc"/><stop offset="0.6000" stop-color="#007ad9"/><stop offset="0.6286" stop-color="#0075d6"/><stop offset="0.6571" stop-color="#006fd4"/><stop offset="0.6857" stop-color="#0169d1"/><stop offset="0.7143" stop-color="#0164cd"/><stop offset="0.7429" stop-color="#025eca"/><stop offset="0.7714" stop-color="#0359c6"/><stop offset="0.8000" stop-color="#0354c3"/><stop offset="0.8286" stop-color="#044fc0"/><stop offset="0.8571" stop-color="#044abe"/><stop offset="0.8857" stop-color="#0545bb"/><stop offset="0.9143" stop-color="#0541b9"/><stop offset="0.9429" stop-color="#063cb6"/><stop offset="0.9714" stop-color="#0638b4"/><stop offset="1.0000" stop-color="#0734b1"/></linearGradient><linearGradient id="r48" gradientUnits="userSpaceOnUse" x1="-48" y1="0" x2="1072" y2="0"><stop offset="0.0000" stop-color="#00b2f8"/><stop offset="0.0286" stop-color="#00b1f7"/><stop offset="0.0571" stop-color="#00b1f6"/><stop offset="0.0857" stop-color="#00b0f6"/><stop offset="0.1143" stop-color="#00b0f5"/><stop offset="0.1429" stop-color="#00aff4"/><stop offset="0.1714" stop-color="#00aef4"/><stop offset="0.2000" stop-color="#00aef3"/><stop offset="0.2286" stop-color="#00adf2"/><stop offset="0.2571" stop-color="#00abf1"/><stop offset="0.2857" stop-color="#00a9f0"/><stop offset="0.3143" stop-color="#00a7ee"/><stop offset="0.3429" stop-color="#00a4ed"/><stop offset="0.3714" stop-color="#00a1eb"/><stop offset="0.4000" stop-color="#009de9"/><stop offset="0.4286" stop-color="#0099e7"/><stop offset="0.4571" stop-color="#0094e5"/><stop offset="0.4857" stop-color="#008fe2"/><stop offset="0.5143" stop-color="#008ae0"/><stop offset="0.5429" stop-color="#0085de"/><stop offset="0.5714" stop-color="#007fdb"/><stop offset="0.6000" stop-color="#007ad9"/><stop offset="0.6286" stop-color="#0074d6"/><stop offset="0.6571" stop-color="#006ed3"/><stop offset="0.6857" stop-color="#0169d0"/><stop offset="0.7143" stop-color="#0163cc"/><stop offset="0.7429" stop-color="#025ec9"/><stop offset="0.7714" stop-color="#0359c5"/><stop offset="0.8000" stop-color="#0354c2"/><stop offset="0.8286" stop-color="#044fc0"/><stop offset="0.8571" stop-color="#044abd"/><stop offset="0.8857" stop-color="#0545bb"/><stop offset="0.9143" stop-color="#0541b8"/><stop offset="0.9429" stop-color="#063cb6"/><stop offset="0.9714" stop-color="#0638b3"/><stop offset="1.0000" stop-color="#0734b1"/></linearGradient><linearGradient id="r49" gradientUnits="userSpaceOnUse" x1="-48" y1="0" x2="1072" y2="0"><stop offset="0.0000" stop-color="#00b2f7"/><stop offset="0.0286" stop-color="#00b1f7"/><stop offset="0.0571" stop-color="#00b0f6"/><stop offset="0.0857" stop-color="#00b0f5"/><stop offset="0.1143" stop-color="#00aff5"/><stop offset="0.1429" stop-color="#00aef4"/><stop offset="0.1714" stop-color="#00aef3"/><stop offset="0.2000" stop-color="#00adf2"/><stop offset="0.2286" stop-color="#00acf1"/><stop offset="0.2571" stop-color="#00aaf0"/><stop offset="0.2857" stop-color="#00a8ef"/><stop offset="0.3143" stop-color="#00a6ed"/><stop offset="0.3429" stop-color="#00a3ec"/><stop offset="0.3714" stop-color="#00a0ea"/><stop offset="0.4000" stop-color="#009ce8"/><stop offset="0.4286" stop-color="#0098e6"/><stop offset="0.4571" stop-color="#0093e4"/><stop offset="0.4857" stop-color="#008ee2"/><stop offset="0.5143" stop-color="#0089df"/><stop offset="0.5429" stop-color="#0084dd"/><stop offset="0.5714" stop-color="#007fdb"/><stop offset="0.6000" stop-color="#0079d8"/><stop offset="0.6286" stop-color="#0074d5"/><stop offset="0.6571" stop-color="#006ed2"/><stop offset="0.6857" stop-color="#0168cf"/><stop offset="0.7143" stop-color="#0163cc"/><stop offset="0.7429" stop-color="#025ec8"/><stop offset="0.7714" stop-color="#0358c5"/><stop offset="0.8000" stop-color="#0353c2"/><stop offset="0.8286" stop-color="#044ebf"/><stop offset="0.8571" stop-color="#044abd"/><stop offset="0.8857" stop-color="#0545ba"/><stop offset="0.9143" stop-color="#0541b8"/><stop offset="0.9429" stop-color="#063cb5"/><stop offset="0.9714" stop-color="#0638b3"/><stop offset="1.0000" stop-color="#0734b0"/></linearGradient><linearGradient id="r50" gradientUnits="userSpaceOnUse" x1="-48" y1="0" x2="1072" y2="0"><stop offset="0.0000" stop-color="#00b2f7"/><stop offset="0.0286" stop-color="#00b1f6"/><stop offset="0.0571" stop-color="#00b0f6"/><stop offset="0.0857" stop-color="#00aff5"/><stop offset="0.1143" stop-color="#00aff4"/><stop offset="0.1429" stop-color="#00aef3"/><stop offset="0.1714" stop-color="#00adf3"/><stop offset="0.2000" stop-color="#00acf2"/><stop offset="0.2286" stop-color="#00abf1"/><stop offset="0.2571" stop-color="#00a9f0"/><stop offset="0.2857" stop-color="#00a7ee"/><stop offset="0.3143" stop-color="#00a5ed"/><stop offset="0.3429" stop-color="#00a2eb"/><stop offset="0.3714" stop-color="#009fe9"/><stop offset="0.4000" stop-color="#009be7"/><stop offset="0.4286" stop-color="#0097e5"/><stop offset="0.4571" stop-color="#0092e3"/><stop offset="0.4857" stop-color="#008ee1"/><stop offset="0.5143" stop-color="#0088df"/><stop offset="0.5429" stop-color="#0083dc"/><stop offset="0.5714" stop-color="#007eda"/><stop offset="0.6000" stop-color="#0078d7"/><stop offset="0.6286" stop-color="#0073d5"/><stop offset="0.6571" stop-color="#006dd2"/><stop offset="0.6857" stop-color="#0168ce"/><stop offset="0.7143" stop-color="#0163cb"/><stop offset="0.7429" stop-color="#025dc8"/><stop offset="0.7714" stop-color="#0358c4"/><stop offset="0.8000" stop-color="#0353c1"/><stop offset="0.8286" stop-color="#044ebf"/><stop offset="0.8571" stop-color="#044abc"/><stop offset="0.8857" stop-color="#0545ba"/><stop offset="0.9143" stop-color="#0540b7"/><stop offset="0.9429" stop-color="#063cb5"/><stop offset="0.9714" stop-color="#0638b2"/><stop offset="1.0000" stop-color="#0734b0"/></linearGradient><linearGradient id="r51" gradientUnits="userSpaceOnUse" x1="-48" y1="0" x2="1072" y2="0"><stop offset="0.0000" stop-color="#00b1f7"/><stop offset="0.0286" stop-color="#00b1f6"/><stop offset="0.0571" stop-color="#00b0f5"/><stop offset="0.0857" stop-color="#00aff4"/><stop offset="0.1143" stop-color="#00aef4"/><stop offset="0.1429" stop-color="#00adf3"/><stop offset="0.1714" stop-color="#00acf2"/><stop offset="0.2000" stop-color="#00abf1"/><stop offset="0.2286" stop-color="#00aaf0"/><stop offset="0.2571" stop-color="#00a8ef"/><stop offset="0.2857" stop-color="#00a6ee"/><stop offset="0.3143" stop-color="#00a4ec"/><stop offset="0.3429" stop-color="#00a1ea"/><stop offset="0.3714" stop-color="#009de9"/><stop offset="0.4000" stop-color="#009ae7"/><stop offset="0.4286" stop-color="#0096e5"/><stop offset="0.4571" stop-color="#0091e3"/><stop offset="0.4857" stop-color="#008de0"/><stop offset="0.5143" stop-color="#0088de"/><stop offset="0.5429" stop-color="#0083dc"/><stop offset="0.5714" stop-color="#007dd9"/><stop offset="0.6000" stop-color="#0078d7"/><stop offset="0.6286" stop-color="#0072d4"/><stop offset="0.6571" stop-color="#006dd1"/><stop offset="0.6857" stop-color="#0168ce"/><stop offset="0.7143" stop-color="#0162cb"/><stop offset="0.7429" stop-color="#025dc7"/><stop offset="0.7714" stop-color="#0358c4"/><stop offset="0.8000" stop-color="#0353c1"/><stop offset="0.8286" stop-color="#044ebe"/><stop offset="0.8571" stop-color="#0449bc"/><stop offset="0.8857" stop-color="#0545b9"/><stop offset="0.9143" stop-color="#0540b7"/><stop offset="0.9429" stop-color="#063cb4"/><stop offset="0.9714" stop-color="#0638b2"/><stop offset="1.0000" stop-color="#0734af"/></linearGradient><filter id="fb" x="-10%" y="-10%" width="120%" height="120%"><feGaussianBlur stdDeviation="2 8"/></filter></defs><g filter="url(#fb)"><rect x="-48" y="-24" width="1120" height="17" fill="url(#r0)"/><rect x="-48" y="-8" width="1120" height="17" fill="url(#r1)"/><rect x="-48" y="8" width="1120" height="17" fill="url(#r2)"/><rect x="-48" y="24" width="1120" height="17" fill="url(#r3)"/><rect x="-48" y="40" width="1120" height="17" fill="url(#r4)"/><rect x="-48" y="56" width="1120" height="17" fill="url(#r5)"/><rect x="-48" y="72" width="1120" height="17" fill="url(#r6)"/><rect x="-48" y="88" width="1120" height="17" fill="url(#r7)"/><rect x="-48" y="104" width="1120" height="17" fill="url(#r8)"/><rect x="-48" y="120" width="1120" height="17" fill="url(#r9)"/><rect x="-48" y="136" width="1120" height="17" fill="url(#r10)"/><rect x="-48" y="152" width="1120" height="17" fill="url(#r11)"/><rect x="-48" y="168" width="1120" height="17" fill="url(#r12)"/><rect x="-48" y="184" width="1120" height="17" fill="url(#r13)"/><rect x="-48" y="200" width="1120" height="17" fill="url(#r14)"/><rect x="-48" y="216" width="1120" height="17" fill="url(#r15)"/><rect x="-48" y="232" width="1120" height="17" fill="url(#r16)"/><rect x="-48" y="248" width="1120" height="17" fill="url(#r17)"/><rect x="-48" y="264" width="1120" height="17" fill="url(#r18)"/><rect x="-48" y="280" width="1120" height="17" fill="url(#r19)"/><rect x="-48" y="296" width="1120" height="17" fill="url(#r20)"/><rect x="-48" y="312" width="1120" height="17" fill="url(#r21)"/><rect x="-48" y="328" width="1120" height="17" fill="url(#r22)"/><rect x="-48" y="344" width="1120" height="17" fill="url(#r23)"/><rect x="-48" y="360" width="1120" height="17" fill="url(#r24)"/><rect x="-48" y="376" width="1120" height="17" fill="url(#r25)"/><rect x="-48" y="392" width="1120" height="17" fill="url(#r26)"/><rect x="-48" y="408" width="1120" height="17" fill="url(#r27)"/><rect x="-48" y="424" width="1120" height="17" fill="url(#r28)"/><rect x="-48" y="440" width="1120" height="17" fill="url(#r29)"/><rect x="-48" y="456" width="1120" height="17" fill="url(#r30)"/><rect x="-48" y="472" width="1120" height="17" fill="url(#r31)"/><rect x="-48" y="488" width="1120" height="17" fill="url(#r32)"/><rect x="-48" y="504" width="1120" height="17" fill="url(#r33)"/><rect x="-48" y="520" width="1120" height="17" fill="url(#r34)"/><rect x="-48" y="536" width="1120" height="17" fill="url(#r35)"/><rect x="-48" y="552" width="1120" height="17" fill="url(#r36)"/><rect x="-48" y="568" width="1120" height="17" fill="url(#r37)"/><rect x="-48" y="584" width="1120" height="17" fill="url(#r38)"/><rect x="-48" y="600" width="1120" height="17" fill="url(#r39)"/><rect x="-48" y="616" width="1120" height="17" fill="url(#r40)"/><rect x="-48" y="632" width="1120" height="17" fill="url(#r41)"/><rect x="-48" y="648" width="1120" height="17" fill="url(#r42)"/><rect x="-48" y="664" width="1120" height="17" fill="url(#r43)"/><rect x="-48" y="680" width="1120" height="17" fill="url(#r44)"/><rect x="-48" y="696" width="1120" height="17" fill="url(#r45)"/><rect x="-48" y="712" width="1120" height="17" fill="url(#r46)"/><rect x="-48" y="728" width="1120" height="17" fill="url(#r47)"/><rect x="-48" y="744" width="1120" height="17" fill="url(#r48)"/><rect x="-48" y="760" width="1120" height="17" fill="url(#r49)"/><rect x="-48" y="776" width="1120" height="17" fill="url(#r50)"/><rect x="-48" y="792" width="1120" height="17" fill="url(#r51)"/></g><defs>
  <filter id="soft" x="-5%" y="-50%" width="110%" height="200%"><feGaussianBlur stdDeviation="1"/></filter>
  <filter id="soft2" x="-5%" y="-50%" width="110%" height="200%"><feGaussianBlur stdDeviation="0.5"/></filter>
  <filter id="glowf" x="-50%" y="-50%" width="200%" height="200%"><feGaussianBlur stdDeviation="6"/></filter>
  <linearGradient id="paneT" x1="0" y1="0" x2="1" y2="1">
    <stop offset="0" stop-color="#20a2fc"/>
    <stop offset="1" stop-color="#1e9cf8"/>
  </linearGradient>
  <linearGradient id="paneR" x1="0" y1="0" x2="0.3" y2="1">
    <stop offset="0" stop-color="#1e9ef8"/>
    <stop offset="1" stop-color="#24aafd"/>
  </linearGradient>
  <linearGradient id="paneB" x1="0" y1="0" x2="1" y2="1">
    <stop offset="0" stop-color="#1f9efa"/>
    <stop offset="1" stop-color="#20a0fb"/>
  </linearGradient>
</defs>
<!-- rays -->
<linearGradient id="rayMg" gradientUnits="userSpaceOnUse" x1="0" y1="0" x2="826" y2="0"><stop offset="0" stop-color="#404040"/><stop offset="0.7" stop-color="#fff"/><stop offset="0.92" stop-color="#fff"/><stop offset="1" stop-color="#000"/></linearGradient>
<mask id="rayM" maskUnits="userSpaceOnUse" x="-50" y="-50" width="1100" height="500"><rect x="-50" y="-50" width="1100" height="500" fill="url(#rayMg)"/></mask>
<linearGradient id="rayB" gradientUnits="userSpaceOnUse" x1="410" y1="169.5" x2="398.8" y2="207.9">
  <stop offset="0" stop-color="#6cd0ff" stop-opacity="0.14"/><stop offset="1" stop-color="#6cd0ff" stop-opacity="0"/>
</linearGradient>
<linearGradient id="rayA" gradientUnits="userSpaceOnUse" x1="410" y1="169.5" x2="421.2" y2="131.1">
  <stop offset="0" stop-color="#002a80" stop-opacity="0.10"/><stop offset="1" stop-color="#002a80" stop-opacity="0"/>
</linearGradient>
<g mask="url(#rayM)"><polygon points="-10,48.1 821,289 809.8,327.4 -21.2,86.5" fill="url(#rayB)"/>
<polygon points="-10,48.1 821,289 832.2,250.6 1.2,9.7" fill="url(#rayA)"/></g>
<line x1="-10" y1="51" x2="821" y2="289" stroke="#8fdcff" stroke-opacity="0.26" stroke-width="1.5" filter="url(#soft2)"/>
<line x1="-10" y1="708" x2="821" y2="479" stroke="#8fdcff" stroke-opacity="0.09" stroke-width="2.4" filter="url(#soft)"/>
<line x1="-10" y1="722" x2="821" y2="493" stroke="#6fd0ff" stroke-opacity="0.06" stroke-width="24" filter="url(#glowf)"/>
<linearGradient id="ray2B" gradientUnits="userSpaceOnUse" x1="313.5" y1="495" x2="318.7" y2="534.7">
  <stop offset="0" stop-color="#80d8ff" stop-opacity="0.06"/><stop offset="1" stop-color="#80d8ff" stop-opacity="0"/>
</linearGradient>
<linearGradient id="ray2A" gradientUnits="userSpaceOnUse" x1="313.5" y1="495" x2="308.3" y2="455.3">
  <stop offset="0" stop-color="#0050a0" stop-opacity="0.04"/><stop offset="1" stop-color="#0050a0" stop-opacity="0"/>
</linearGradient>
<polygon points="-10,538.3 637,453 642.2,492.7 -4.8,578" fill="url(#ray2B)"/>
<polygon points="-10,538.3 637,453 631.8,413.3 -15.2,498.6" fill="url(#ray2A)"/>
<line x1="-10" y1="538.3" x2="637" y2="453" stroke="#8fdcff" stroke-opacity="0.09" stroke-width="1.5" filter="url(#soft2)"/>
<!-- glow along right edge -->
<rect x="812" y="300" width="22" height="170" fill="#1a7cff" opacity="0.35" filter="url(#glowf)"/>
<!-- panes -->
<g>
  <polygon points="636.5,315.2 716,304.4 716,382 636.5,382" fill="url(#paneT)"/>
  <polygon points="720,303.8 821,290 821,382 720,382" fill="url(#paneR)"/>
  <polygon points="636.5,386.4 716,386.4 716,463.6 636.5,453.2" fill="url(#paneB)"/>
  <polygon points="720,386.4 821,386.4 821,478 720,464.4" fill="url(#paneB)"/>
  <!-- reflection -->
  <polygon points="636.5,453.2 716,442.4 716,463.6" fill="#38b8ff" opacity="0.12"/>
  <polygon points="720,441.8 821,427.3 821,478 720,464.4" fill="#38b8ff" opacity="0.12"/>
  <line x1="637" y1="453" x2="821" y2="427.3" stroke="#6fd8ff" stroke-opacity="0.35" stroke-width="1"/>
  <!-- edges -->
  <line x1="637.5" y1="382" x2="637.5" y2="315.6" stroke="#5cd6ff" stroke-opacity="0.75" stroke-width="1.6"/><line x1="637.5" y1="315.6" x2="715.5" y2="305" stroke="#5cd6ff" stroke-opacity="0.3" stroke-width="1.2"/>
  <line x1="720.5" y1="304.2" x2="820.2" y2="290.8" stroke="#66e4ff" stroke-opacity="0.45" stroke-width="1.3"/><line x1="820.2" y1="290.8" x2="820.2" y2="382" stroke="#66e4ff" stroke-opacity="0.85" stroke-width="1.8"/>
  <line x1="715.2" y1="305" x2="715.2" y2="382" stroke="#48c8ff" stroke-opacity="0.5" stroke-width="1"/>
  <line x1="720.6" y1="304" x2="720.6" y2="382" stroke="#48c8ff" stroke-opacity="0.4" stroke-width="1"/>
  <polyline points="637.5,386.5 637.5,452.8 715.5,463.2" fill="none" stroke="#5cd6ff" stroke-opacity="0.8" stroke-width="1.6"/>
  <polyline points="720.5,464 820.2,477.4 820.2,386.5" fill="none" stroke="#66e4ff" stroke-opacity="0.85" stroke-width="1.8"/>
  <line x1="715.2" y1="386.5" x2="715.2" y2="463" stroke="#48c8ff" stroke-opacity="0.5" stroke-width="1"/>
  <line x1="720.6" y1="386.5" x2="720.6" y2="464" stroke="#48c8ff" stroke-opacity="0.4" stroke-width="1"/>
  <line x1="637" y1="381.3" x2="820" y2="381.3" stroke="#48c8ff" stroke-opacity="0.35" stroke-width="1"/>
  <line x1="637" y1="387" x2="820" y2="387" stroke="#48c8ff" stroke-opacity="0.35" stroke-width="1"/>
</g>
<!-- small black mark right edge -->
<rect x="1022" y="227" width="2" height="17" fill="#000"/>
</svg>

<div id="menu">
  <div class="it" style="top:9px">查看(V)</div>
  <div class="it" style="top:32px">排序方式(O)</div>
  <div class="it" style="top:55px">刷新(E)</div>
  <div class="sep" style="top:76px"></div>
  <div class="it dis" style="top:84px">粘贴(P)</div>
  <div class="it dis" style="top:107px">粘贴快捷方式(S)</div>
  <div class="sep" style="top:129px"></div>
  <div class="it" style="top:137px">新建(W)</div>
  <div class="sep" style="top:159px"></div>
  <div class="it" style="top:168px">显示设置(D)</div>
  <div class="it" style="top:190px">个性化(R)</div>
</div>
<svg class="ic" style="left:0;top:0" width="1024" height="768">
  <!-- menu arrows -->
  <g fill="none" stroke="#2a1a1a" stroke-width="1.05">
    <polyline points="607.5,318.5 614.5,324.8 607.5,331"/>
    <polyline points="607.5,341.5 614.5,347.8 607.5,354"/>
    <polyline points="607.5,447.5 614.5,453.8 607.5,460"/>
  </g>
  <!-- display settings icon -->
  <g>
    <rect x="437.5" y="479.5" width="15" height="9.5" fill="#48b2ee" stroke="#2e6c9a" stroke-width="1"/>
    <rect x="438" y="482" width="10.8" height="6.5" fill="#acdaf8"/>
    <path d="M438 482.6 h10.2 v5.9" fill="none" stroke="#ffffff" stroke-width="1"/>
    <rect x="441" y="490" width="8" height="1" fill="#6a7682"/>
  </g>
  <!-- personalize icon -->
  <g>
    <rect x="437.5" y="502" width="15" height="9.5" fill="#48b2ee" stroke="#2e6c9a" stroke-width="1"/>
    <rect x="438" y="506" width="4.2" height="5" fill="#5c12e6"/>
    <rect x="438" y="509.4" width="14" height="1.6" fill="#5c12e6"/>
    <path d="M446.3 505.6 L452.2 499.8" stroke="#434c55" stroke-width="1.8" stroke-linecap="round"/>
    <path d="M442.8 508.6 L446.4 505.4" stroke="#f0f0f0" stroke-width="2.2" stroke-linecap="round"/>
    <rect x="441" y="513" width="8" height="1" fill="#6a7682"/>
  </g>
  <!-- red dashed box -->
  <rect x="432.7" y="494.6" width="107.7" height="25.6" rx="1.5" fill="none" stroke="#f70d14" stroke-width="2.8" stroke-dasharray="5.5 6.5" stroke-dashoffset="0.8" stroke-linecap="round"/>
</svg>

<div id="taskbar">
  <div id="search"><div class="stxt">在这里输入你要搜索的内容</div></div>
  <div class="w" style="left:725px;top:11px;font-size:15px;line-height:17px;">18°C</div>
  <div class="w" style="left:879px;top:11px;font-size:15px;line-height:17px;">英</div>
  <div class="w" style="left:919px;top:3px;font-size:13px;line-height:15px;">11:05</div>
  <div class="w" style="left:908px;top:22px;font-size:13px;line-height:15px;">2022/3/7</div>
</div>
<svg class="ic" style="left:0;top:728px" width="1024" height="40">
  <!-- start logo -->
  <g fill="#ffffff">
    <polygon points="16,14 22,13.1 22,18.8 16,18.8"/>
    <polygon points="23,13 32.1,11.8 32.1,18.8 23,18.8"/>
    <polygon points="16,20 22,20 22,26.9 16,25.9"/>
    <polygon points="23,20 32.1,20 32.1,28.1 23,26.9"/>
  </g>
  <!-- search icon -->
  <g fill="none" stroke="#1a1a1a" stroke-width="1.2">
    <circle cx="70.4" cy="17.4" r="5.1"/>
    <line x1="66.7" y1="21.2" x2="60.5" y2="27.4"/>
  </g>
  <!-- cortana -->
  <circle cx="392" cy="20" r="6.2" fill="none" stroke="#fff" stroke-width="2.2"/>
  <!-- task view -->
  <g fill="none" stroke="#fff" stroke-width="1.3">
    <path d="M432.6 12.2 v2.2 h9.8 v-2.2"/>
    <rect x="432.6" y="16.6" width="9.8" height="5.8"/>
    <path d="M432.6 27 v-2.2 h9.8 v2.2"/>
    <line x1="446.6" y1="12" x2="446.6" y2="14.8"/>
    <line x1="446.6" y1="20" x2="446.6" y2="27"/>
  </g>
  <rect x="445.2" y="16.1" width="2.8" height="2.8" fill="#fff"/>
  <!-- file explorer -->
  <g>
    <path d="M480.2 11.1 h8.8 l1.2 1.2 v1.5 h-10z" fill="#e6a400"/>
    <path d="M480.2 13.8 h9 l1.4 -1.6 h10.7 v15.7 h-21.1z" fill="#fdd461"/>
    <path d="M484.2 29 v-6.4 q0 -1.6 1.6 -1.6 h10.5 q1.6 0 1.6 1.6 v6.4 h-4 v-5 h-5.7 v5z" fill="#3b8fe3"/>
  </g>
  <!-- weather cloud -->
  <defs>
    <linearGradient id="cg" gradientUnits="userSpaceOnUse" x1="0" y1="13" x2="0" y2="27">
      <stop offset="0" stop-color="#e4f6ff"/><stop offset="0.5" stop-color="#b8e0fa"/><stop offset="1" stop-color="#8ec6ee"/>
    </linearGradient>
    <clipPath id="cc"><circle cx="704" cy="19.2" r="6.1"/><circle cx="711" cy="21.6" r="4.9"/><circle cx="698.2" cy="22.9" r="4.1"/><rect x="698" y="21" width="13.5" height="6"/></clipPath>
  </defs>
  <g clip-path="url(#cc)">
    <rect x="690" y="10" width="30" height="20" fill="url(#cg)"/>
    <path d="M690 21.5 q6 -1.5 12 1.2 q6 2.6 14 2.3 v5 h-26z" fill="#6aa8dc" opacity="0.75"/>
    <path d="M690 24.5 q6 -0.8 11 1.2 q5 1.8 15 1.5 v3 h-26z" fill="#4f90cc" opacity="0.5"/>
  </g>
  <!-- partial char -->
  <path d="M764.5 18.4 h7 M771 20.5 l-5.6 6.2" stroke="#fff" stroke-width="1.1" fill="none"/>
  <!-- chevron -->
  <polyline points="811.5,22.5 816.5,17 821.5,22.5" fill="none" stroke="#fff" stroke-width="1.1"/>
  <!-- network icon -->
  <g fill="none" stroke="#fff" stroke-width="1.1">
    <rect x="832.6" y="14.4" width="14.8" height="7.8"/>
    <line x1="840" y1="22.2" x2="840" y2="25.6"/>
    <line x1="836" y1="25.8" x2="844.4" y2="25.8"/>
  </g>
  <!-- volume -->
  <g fill="none" stroke="#fff" stroke-width="1.1">
    <path d="M856.5 16.8 h2.5 l3.8 -3.6 v11.4 l-3.8 -3.6 h-2.5z"/>
    <path d="M865 16.5 q1.4 2.4 0 4.8"/>
    <path d="M867.2 14.5 q2.6 4.4 0 8.8"/>
    <path d="M869.4 12.8 q3.6 6.1 0 12.2"/>
  </g>
  <!-- notification -->
  <path d="M983.6 12.3 h15 v12.4 h-5 l-2.8 3 l-2.8 -3 h-4.4z" fill="none" stroke="#fff" stroke-width="1.1"/>
  <rect x="1019" y="0" width="1" height="40" fill="#5a626c"/>
</svg>

<!-- watermark -->
<svg class="ic" style="left:0;top:0" width="1024" height="768">
  <path d="M771 736 q0 -11 11 -11 h27 v26.6 q0 11 -11 11 h-27z" fill="#3d9ff0"/>
  <g transform="translate(776,732.4) scale(1.17,1.0)">
    <path d="M23.953 4.57a10 10 0 01-2.825.775 4.958 4.958 0 002.163-2.723c-.951.555-2.005.959-3.127 1.184a4.92 4.92 0 00-8.384 4.482C7.69 8.095 4.067 6.13 1.64 3.162a4.822 4.822 0 00-.666 2.475c0 1.71.87 3.213 2.188 4.096a4.904 4.904 0 01-2.228-.616v.06a4.923 4.923 0 003.946 4.827 4.996 4.996 0 01-2.212.085 4.936 4.936 0 004.604 3.417 9.867 9.867 0 01-6.102 2.105c-.39 0-.779-.023-1.17-.067a13.995 13.995 0 007.557 2.209c9.053 0 13.998-7.496 13.998-13.985 0-.21 0-.42-.015-.63A9.935 9.935 0 0024 4.59z" fill="#ffffff"/>
  </g>
</svg>
<div class="w" style="left:817px;top:723px;font-size:24px;line-height:28px;color:#3d9ff0;font-weight:350;letter-spacing:0.5px;">白云一键重装系统</div>
<div class="w" style="left:817px;top:748.5px;font-size:11px;line-height:12px;color:#3d9ff0;letter-spacing:4.4px;">www.baiyunxitong.com</div>
</body></html>
